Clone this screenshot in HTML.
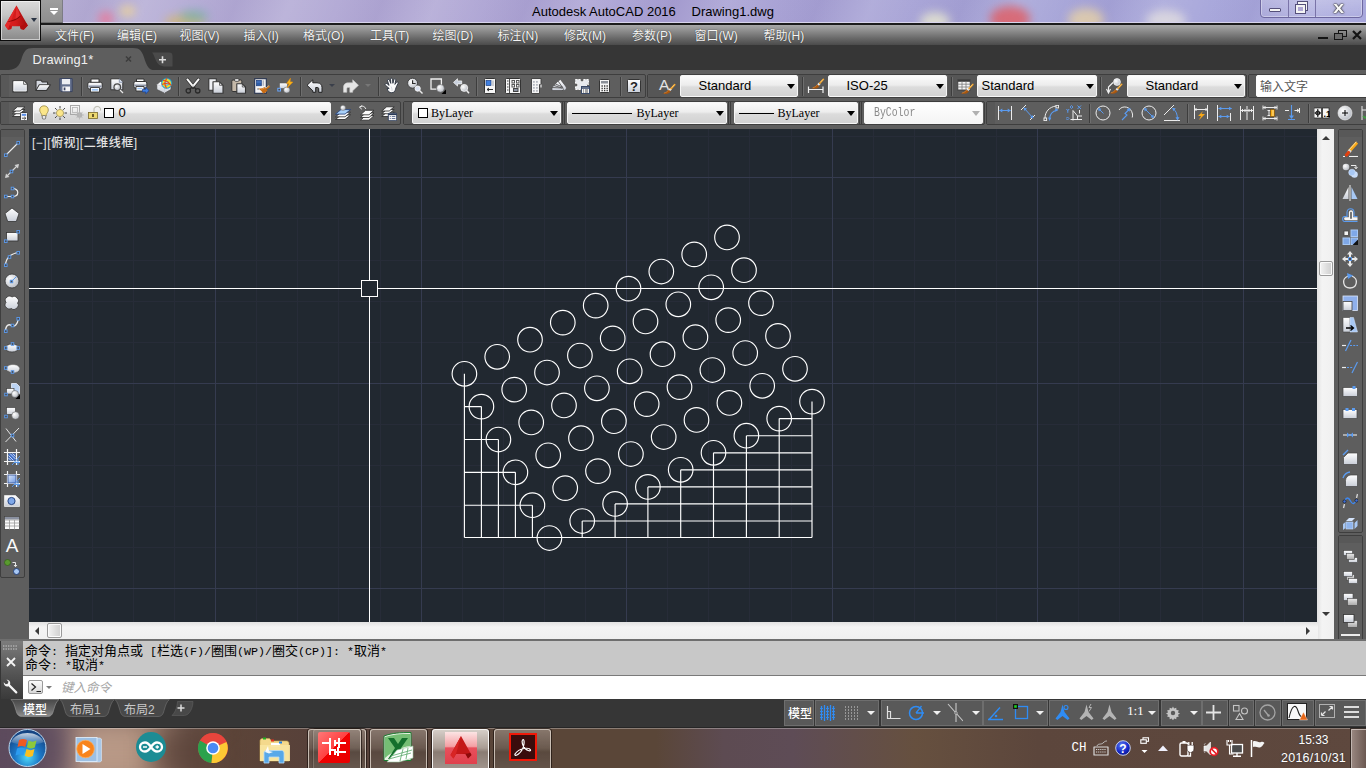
<!DOCTYPE html>
<html lang="zh-CN">
<head>
<meta charset="utf-8">
<title>Autodesk AutoCAD 2016 Drawing1.dwg</title>
<style>
html,body{margin:0;padding:0;}
body{width:1366px;height:768px;overflow:hidden;position:relative;background:#363636;font-family:"Liberation Sans","Noto Sans CJK SC",sans-serif;font-size:12px;color:#000;}
.abs,.abs *{position:absolute;}
div,svg,span{position:absolute;box-sizing:border-box;}
span{white-space:nowrap;}
/* ---- title bar ---- */
#title{left:0;top:0;width:1366px;height:23px;background:linear-gradient(90deg,#b9b1d6 0%,#b3aad6 30%,#aaa2d4 50%,#a8a6d8 75%,#aaaade 100%);overflow:hidden;}
#title .blob{border-radius:50%;filter:blur(5px);}
#titleline{left:0;top:22px;width:1366px;height:1px;background:#d8d4ec;}
#titleline2{left:0;top:23px;width:1366px;height:2px;background:#1c1c1c;}
.tt{top:4px;font-size:13px;color:#000;}
/* ---- menu bar ---- */
#menu{left:0;top:25px;width:1366px;height:20px;background:linear-gradient(180deg,#a9a9a9 0%,#8c8c8c 30%,#6a6a6a 65%,#4b4b4b 100%);}
#menu span{top:1px;font-size:12px;color:#f4f4f4;text-shadow:0 0 1px #222;}
/* ---- file tab bar ---- */
#tabbar{left:0;top:45px;width:1366px;height:25px;background:#363636;}
#tb1bg{left:0;top:70px;width:1366px;height:59px;background:#5e5e5e;}
/* ---- toolbars ---- */
.tbar{background:#5e5e5e;border:1px solid #3e3e3e;border-radius:2px;}
.grip{width:8px;background:#585858;}
.sep{width:1px;background:#3d3d3d;border-right:1px solid #6e6e6e;box-sizing:content-box;}
.combo{background:linear-gradient(180deg,#fafafa 0%,#ededed 45%,#dcdcdc 55%,#d2d2d2 100%);border:1px solid #f6f6f6;border-radius:2px;height:21px;}
.combo span{color:#000;}
.combo.dis{background:linear-gradient(180deg,#fff,#f4f4f4);}
.combo.dis span{color:#8a8a8a;}
.sep2{width:3px;height:22px;border-left:1px solid #3c3c3c;border-right:1px solid #3c3c3c;}
.thumb{background:linear-gradient(90deg,#f4f4f4,#dcdcdc 60%,#cfcfcf);border:1px solid #9a9a9a;border-radius:2px;box-shadow:inset 0 0 0 1px #fafafa;}
.sgrp{background:#595959;border:1px solid #6e6e6e;}
.arrow{width:0;height:0;border-left:4px solid transparent;border-right:4px solid transparent;border-top:5px solid #000;}
/* ---- drawing ---- */
#draw{left:29px;top:129px;width:1288px;height:493px;background:#212830;overflow:hidden;}
#leftbar{left:0;top:129px;width:29px;height:511px;background:#5e5e5e;}
#rightbar{left:1334px;top:127px;width:32px;height:513px;background:#5e5e5e;}
#vscroll{left:1317px;top:129px;width:17px;height:510px;background:linear-gradient(90deg,#e2e2e2,#f4f4f4 30%,#f0f0f0);}
#hscroll{left:29px;top:622px;width:1289px;height:17px;background:linear-gradient(180deg,#e2e2e2,#f4f4f4 30%,#f0f0f0);}
/* ---- command line ---- */
#cmd{left:22px;top:641px;width:1344px;height:58px;background:#c8c8c8;}
#cmdin{left:22px;top:675px;width:1344px;height:23.500px;background:#fff;border-top:1px solid #7a7a7a;}
#cmdleft{left:1px;top:641px;width:21.500px;height:57.500px;background:linear-gradient(180deg,#7c7c7c 0%,#666 30%,#525252 60%,#3a3a3a 100%);}
.mono i{font-style:normal;font-size:13px;}
.mono{font-family:"Liberation Mono","Noto Sans Mono CJK SC","Noto Sans CJK SC",monospace;}
/* ---- status ---- */
#status{left:0;top:699px;width:1366px;height:29px;background:#363636;}
/* ---- taskbar ---- */
#task{left:0;top:728px;width:1366px;height:40px;background:linear-gradient(90deg,#5e4c5a 0%,#6a5860 4%,#7a6460 8%,#5c4438 17%,#56403a 24%,#5a4638 40%,#5a4638 48%,#5d4b52 53%,#5e4c56 58%,#66503f 67%,#5c463c 76%,#5e483e 100%);overflow:hidden;}
</style>
</head>
<body>
<!-- TITLE BAR -->
<div id="title">
  <div style="left:0;top:0;width:1366px;height:23px;background:repeating-linear-gradient(112deg,rgba(255,255,255,.10) 0px,rgba(255,255,255,0) 45px,rgba(70,50,130,.07) 85px,rgba(255,255,255,.10) 135px)"></div>
  <div class="blob" style="left:98px;top:11px;width:16px;height:16px;background:#f07090;opacity:.65;filter:blur(4px)"></div>
  <div class="blob" style="left:119px;top:5px;width:17px;height:12px;background:#f4d890;opacity:.65;filter:blur(4px)"></div>
  <div class="blob" style="left:165px;top:15px;width:40px;height:14px;background:#d8b860;opacity:.7"></div>
  <div class="blob" style="left:180px;top:10px;width:28px;height:12px;background:#60b0a0;opacity:.55"></div>
  <div class="blob" style="left:920px;top:12px;width:30px;height:20px;background:#e8e8d0;opacity:.8"></div>
  <div class="blob" style="left:990px;top:6px;width:40px;height:26px;background:#e85050;opacity:.7"></div>
  <div class="blob" style="left:1068px;top:8px;width:36px;height:24px;background:#f0d8a0;opacity:.7"></div>
  <div class="blob" style="left:1146px;top:10px;width:40px;height:22px;background:#e8e4e0;opacity:.7"></div>
</div>
<div id="titleline"></div><div id="titleline2"></div>
<span class="tt" style="left:532px">Autodesk AutoCAD 2016</span><span class="tt" style="left:691.5px">Drawing1.dwg</span>

<!-- MENU BAR -->
<div id="menu">
  <span style="left:55px">文件(F)</span>
  <span style="left:117px">编辑(E)</span>
  <span style="left:179.5px">视图(V)</span>
  <span style="left:243.5px">插入(I)</span>
  <span style="left:303px">格式(O)</span>
  <span style="left:370px">工具(T)</span>
  <span style="left:432.5px">绘图(D)</span>
  <span style="left:497.5px">标注(N)</span>
  <span style="left:564px">修改(M)</span>
  <span style="left:632px">参数(P)</span>
  <span style="left:694.5px">窗口(W)</span>
  <span style="left:763.5px">帮助(H)</span>
</div>

<div id="tabbar"></div>
<div id="tb1bg"></div>
<div style="left:0;top:0;width:41px;height:41px;background:linear-gradient(180deg,#dadada 0%,#c6c6c6 35%,#a2a2a2 70%,#8a8a8a 100%);border:1px solid #0c0c0c;box-shadow:inset 0 0 0 1px rgba(255,255,255,.55)"></div>
<svg style="left:0;top:0" width="41" height="41" viewBox="0 0 41 41">
<defs><linearGradient id="ga" x1="0" y1="0" x2="1" y2="0"><stop offset="0" stop-color="#e02222"/><stop offset=".45" stop-color="#d41c1c"/><stop offset="1" stop-color="#a00c0c"/></linearGradient></defs>
<path d="M16.500 5.600L5 25.600l3 4.100 3.200-.7.700-2.750h8.100l.8 2.750 2.950.7 4.050-4.100z" fill="url(#ga)"/>
<path d="M16.500 5.600L5 25.600l3 4.100 1.500-4.500z" fill="#e42a2a"/>
<path d="M8.500 21.200c5-1 9-3 11.500-5.800l.6 1.200c-3 3-7 5-12.500 5.500z" fill="#8c0808"/>
<path d="M16.500 5.600l3.500 9.800c-1.500 1.500-3 2.700-4.500 3.500z" fill="#e83434" opacity=".8"/>
<path d="M20 26.250l.8 2.750 2.950.7 4.050-4.100-1.500-2.500c-1.500 1.500-3.500 2.500-6.300 3.150z" fill="#b00e0e"/>
<path d="M8 29.700l3.200-.7.700-2.750-2.400-1z" fill="#c41414"/>
</svg>
<div style="left:31px;top:18px;width:0;height:0;border-left:3.500px solid transparent;border-right:3.500px solid transparent;border-top:4.500px solid #2a3444"></div>
<div style="left:41px;top:0;width:22px;height:23px;background:linear-gradient(180deg,#9e9e9e,#8e8e8e);border-right:1px solid #7c7c84;border-bottom:1px solid #6c6c6c"></div>
<div style="left:50px;top:7.500px;width:8px;height:2px;background:#fff"></div><div style="left:50px;top:11px;width:0;height:0;border-left:4px solid transparent;border-right:4px solid transparent;border-top:4px solid #fff"></div>
<div style="left:1260px;top:-4px;width:103px;height:22px;border:1px solid #6e68a0;border-radius:4px;background:linear-gradient(180deg,rgba(255,255,255,.25),rgba(255,255,255,.05));box-shadow:inset 0 0 0 1px rgba(255,255,255,.35)"></div>
<div style="left:1288px;top:0;width:1px;height:17px;background:#7a74a8"></div><div style="left:1315px;top:0;width:1px;height:17px;background:#7a74a8"></div>
<div style="left:1269px;top:8px;width:12px;height:4px;background:#f4f4f4;border:1px solid #55507a;border-radius:1px"></div>
<div style="left:1298px;top:2px;width:9px;height:8px;border:2px solid #f4f4f4;outline:1px solid #55507a;background:transparent"></div><div style="left:1296px;top:5px;width:9px;height:8px;border:2px solid #f4f4f4;outline:1px solid #55507a;background:#b0a8d4"></div>
<span style="left:1334px;top:-2px;font-size:17px;font-weight:bold;color:#f8f8f8;text-shadow:0 0 1px #333,0 0 1px #333,0 0 2px #333;transform:scaleX(1.15)">x</span>
<div style="left:1318px;top:37px;width:10px;height:2px;background:#141414"></div>
<div style="left:1338px;top:30px;width:9px;height:7px;border:1.500px solid #141414"></div><div style="left:1334px;top:33px;width:9px;height:7px;border:1.500px solid #141414;background:#6a6a6a"></div>
<svg style="left:1352px;top:30px" width="10" height="10" viewBox="0 0 10 10"><path d="M1 1l8 8M9 1l-8 8" stroke="#141414" stroke-width="2.200"/></svg>
<svg style="left:0;top:45px" width="200" height="26" viewBox="0 0 200 26">
<path d="M0 25.500c14 0 18-2 21-10 3-10 5-12.500 12-12.500h100c7 0 9 2.500 12 12.500 3 8 5 10 12 10z" fill="#5e5e5e"/>
<path d="M0 19c8 0 10-1 11-4v11h-11z" fill="#2c2c2c" opacity=".0"/>
<path d="M152 7.500h17c2.500 0 3.500 1 3.500 3.500v10.500h-7c-5 0-8-2-10-7-1.500-3.500-2-5.500-3.500-7z" fill="#4a4a4a"/>
<path d="M126 11.500l5 5M131 11.500l-5 5" stroke="#3c3c3c" stroke-width="1.500"/>
<path d="M159 14.700h7M162.500 11.200v7" stroke="#dcdcdc" stroke-width="1.600"/>
</svg>
<span style="left:32.500px;top:52px;font-size:12.800px;color:#f0f0f0;letter-spacing:.2px">Drawing1*</span>
<svg width="0" height="0" style="left:0;top:0"><defs>
<linearGradient id="gw" x1="0" y1="0" x2="0" y2="1"><stop offset="0" stop-color="#ffffff"/><stop offset="1" stop-color="#c9ced8"/></linearGradient>
<linearGradient id="gg" x1="0" y1="0" x2="0" y2="1"><stop offset="0" stop-color="#e8e8e8"/><stop offset="1" stop-color="#a8a8a8"/></linearGradient>
<radialGradient id="gs" cx=".35" cy=".35" r=".7"><stop offset="0" stop-color="#ffffff"/><stop offset="1" stop-color="#b8bcc4"/></radialGradient>
<linearGradient id="gb" x1="0" y1="0" x2="0" y2="1"><stop offset="0" stop-color="#8fb8f0"/><stop offset="1" stop-color="#3f78d0"/></linearGradient>
<linearGradient id="gbr" x1="0" y1="1" x2="1" y2="0"><stop offset="0" stop-color="#8a4a10"/><stop offset=".6" stop-color="#c87828"/><stop offset="1" stop-color="#f8e8c8"/></linearGradient>
</defs></svg>
<div class="tbar" style="left:0px;top:74px;width:646px;height:24px"></div><div class="grip" style="left:1px;top:75px;height:22px"></div>
<svg style="left:12px;top:78px;overflow:visible" width="16" height="16" viewBox="0 0 16 16"><path d="M.9 2.700h10.900l3.400 3.400v7.800h-14.300z" fill="url(#gw)" stroke="#343434" stroke-width="1.1" stroke-linejoin="round"/><path d="M1.800 3.600h9.600l2.900 2.900v6.500h-12.500z" fill="none" stroke="#fff" stroke-width=".7"/><path d="M11.600 3v3.300h3.300" fill="#f4f4f4" stroke="#343434" stroke-width=".7"/></svg>
<svg style="left:35px;top:78px;overflow:visible" width="16" height="16" viewBox="0 0 16 16"><path d="M1 12.500v-9.500c0-.5.300-.8.800-.8h4l1.500 1.800h4.500c.5 0 .8.300.8.800v2" fill="#d4d8e0" stroke="#343434" stroke-width="1.100" stroke-linejoin="round"/><path d="M1 12.500l3.300-5.700h11.200l-4 5.700z" fill="url(#gw)" stroke="#343434" stroke-width="1.100" stroke-linejoin="round"/><path d="M2.500 11.700l2.300-4.100h9" fill="none" stroke="#fff" stroke-width=".6"/></svg>
<svg style="left:58px;top:78px;overflow:visible" width="16" height="16" viewBox="0 0 16 16"><path d="M1.800 .600h12.400v13h-11l-1.400-1.400z" fill="#66728f" stroke="#3a4460" stroke-width="1"/><rect x="4" y="1" width="8" height="5.300" fill="#eceef2"/><rect x="4.500" y="8.500" width="7.500" height="4.800" fill="#f4f4f6"/><rect x="5.700" y="9.500" width="1.700" height="2.800" fill="#3a4460"/></svg>
<div class="sep" style="left:81px;top:77px;height:19px"></div>
<svg style="left:87px;top:78px;overflow:visible" width="16" height="16" viewBox="0 0 16 16"><path d="M4 4.500v-3.500h8v3.500" fill="#fafafa" stroke="#343434" stroke-width="1"/><rect x=".8" y="4.300" width="14.400" height="6.700" rx="1.600" fill="url(#gw)" stroke="#343434" stroke-width="1"/><path d="M1.500 8.300h13" stroke="#8a92a4" stroke-width="1.600"/><path d="M3.500 9.500h9v4.500h-9z" fill="#fff" stroke="#343434" stroke-width=".9"/><path d="M4.800 11.800h6.400" stroke="#9cc4f4" stroke-width="1.800"/></svg>
<svg style="left:110px;top:78px;overflow:visible" width="16" height="16" viewBox="0 0 16 16"><path d="M.8 .800h8.500l3.500 3.500v7.500h-12z" fill="url(#gw)" stroke="#343434" stroke-width="1" stroke-linejoin="round"/><path d="M9.300 .800v3.500h3.500" fill="#dfe6f4" stroke="#5a6a8a" stroke-width=".6"/><circle cx="7.300" cy="9.200" r="3.900" fill="#4a4a4a"/><circle cx="7.300" cy="9.200" r="2.700" fill="url(#gs)"/><path d="M10 12l3 3" stroke="#e8e8e8" stroke-width="1.300"/></svg>
<svg style="left:133px;top:78px;overflow:visible" width="16" height="16" viewBox="0 0 16 16"><path d="M3.500 4v-3h7.500v3" fill="#fafafa" stroke="#343434" stroke-width="1"/><rect x=".8" y="3.500" width="13" height="6.500" rx="1.600" fill="url(#gw)" stroke="#343434" stroke-width="1"/><path d="M1.500 7.300h11.500" stroke="#8a92a4" stroke-width="1.400"/><path d="M3 8.500h8v4.500h-8z" fill="#fff" stroke="#343434" stroke-width=".9"/><path d="M4.300 10.500h5" stroke="#9cc4f4" stroke-width="1.500"/><path d="M9.500 11.300h3.200v-2l3.300 3.300-3.300 3.300v-2h-3.200z" fill="#3f7fe0" stroke="#1a3f90" stroke-width=".7"/></svg>
<svg style="left:156px;top:78px;overflow:visible" width="16" height="16" viewBox="0 0 16 16"><path d="M.8 6.500l3.500-3h7l3.700 3v5l-6.500 3.700-7.700-3.700z" fill="url(#gw)" stroke="#4a4a4a" stroke-width=".7"/><path d="M.8 6.500l7.700 3v5.700" fill="none" stroke="#c8ccd4" stroke-width=".7"/><circle cx="10.700" cy="5.200" r="5.200" fill="#40bce0" stroke="#2088b0" stroke-width=".6"/><circle cx="10.700" cy="5.200" r="3.400" fill="none" stroke="#f4e020" stroke-width="1.800"/><circle cx="10.700" cy="5.200" r="1.600" fill="#90d8f0"/><path d="M7 2.500c3-.5 6 2 8.500 5M11 .2c-2.500 3-2.500 7-.5 10M6 6.500c3-1.500 6.500-1 9 .5" stroke="#f04818" stroke-width="1.100" fill="none"/></svg>
<div class="sep" style="left:178px;top:77px;height:19px"></div>
<svg style="left:185px;top:78px;overflow:visible" width="16" height="16" viewBox="0 0 16 16"><path d="M1.700 .500l7.600 9.500" stroke="#2a2a2a" stroke-width="3.200"/><path d="M14.300 .500l-7.600 9.500" stroke="#2a2a2a" stroke-width="3.200"/><path d="M2 .800l6.500 8" stroke="#fafafa" stroke-width="2"/><path d="M14 .800l-6.500 8" stroke="#fafafa" stroke-width="2"/><circle cx="3.300" cy="12.800" r="2.200" fill="none" stroke="#2a2a2a" stroke-width="1.300"/><circle cx="12.700" cy="12.800" r="2.200" fill="none" stroke="#2a2a2a" stroke-width="1.300"/><path d="M4.800 11.300l3.200-3 3.200 3" stroke="#2a2a2a" stroke-width="1.300" fill="none"/><circle cx="8" cy="8.300" r=".8" fill="#fff"/></svg>
<svg style="left:208px;top:78px;overflow:visible" width="16" height="16" viewBox="0 0 16 16"><path d="M.800 .800h7.500v11.500h-7.500z" fill="#eef0f4" stroke="#343434" stroke-width="1.1" stroke-linejoin="round"/><path d="M5 3.800h6.500l3.500 3.500v8h-10z" fill="url(#gw)" stroke="#343434" stroke-width="1.1" stroke-linejoin="round"/><path d="M11.500 4.200v3.100h3.100" fill="none" stroke="#343434" stroke-width=".7"/></svg>
<svg style="left:231px;top:78px;overflow:visible" width="16" height="16" viewBox="0 0 16 16"><rect x=".8" y="2" width="10" height="11.500" rx="1.200" fill="#c4b8a8" stroke="#343434" stroke-width="1"/><rect x="3.500" y=".7" width="4.600" height="2.600" rx="1.200" fill="#f4f4f4" stroke="#343434" stroke-width=".8"/><path d="M5.800 5.800h5.500l3.200 3.200v6.300h-8.700z" fill="url(#gw)" stroke="#343434" stroke-width="1.1" stroke-linejoin="round"/><path d="M11.300 6.200v2.800h2.800" fill="none" stroke="#343434" stroke-width=".7"/></svg>
<svg style="left:254px;top:78px;overflow:visible" width="16" height="16" viewBox="0 0 16 16"><rect x=".7" y=".7" width="11.600" height="14.600" fill="#f4f4f6" stroke="#26324e" stroke-width="1.100"/><rect x="2.300" y="2.300" width="5.200" height="5.500" fill="#2c5ca8" stroke="#1c3a78" stroke-width=".6"/><path d="M2.500 4h5" stroke="#5f8ad0" stroke-width=".8"/><path d="M9.300 2.300v5.500" stroke="#b0b4c0" stroke-width="1.600"/><path d="M3 11l1.500-1v2z" fill="#555"/><path d="M15.800 8.200l-4.300 3.300" stroke="#c86c14" stroke-width="1.500"/><path d="M15 7.500l-3.500 2.800" stroke="#f0c890" stroke-width=".8"/><path d="M4.500 10.500c2.500 0 4.500-.3 6-1.500l3 3.500c-1.500 2-3 3-4.500 3-1-2-2.500-3.500-4.500-5z" fill="#c86c14"/><path d="M7 11c1.500 0 2.500-.3 3.500-1" stroke="#e8a050" stroke-width=".8" fill="none"/></svg>
<svg style="left:277px;top:78px;overflow:visible" width="16" height="16" viewBox="0 0 16 16"><rect x="2.500" y="5" width="8" height="5.500" fill="url(#gw)" stroke="#5a5a5a" stroke-width=".6"/><ellipse cx="9.800" cy="12" rx="3.200" ry="3" fill="url(#gs)" stroke="#5a5a5a" stroke-width=".5"/><rect x=".8" y="10.300" width="2.700" height="2.700" fill="#4a4a4a" stroke="#6aa8ff" stroke-width="1"/><path d="M13.500 0l-4 5.500 2.500.3-2 4.200 6-6-2.800-.3z" fill="#f8b418" stroke="#e88808" stroke-width=".4"/></svg>
<div class="sep" style="left:300px;top:77px;height:19px"></div>
<svg style="left:306px;top:78px;overflow:visible" width="16" height="16" viewBox="0 0 16 16"><path d="M1 7.300l5.800-5.500v3h4.200c3.500 0 5 2 5 4.700v4.800h-3.300v-3.300c0-1.200-.5-1.500-1.700-1.500h-1.300v4.800h-2.900v-1.500z" fill="url(#gw)" stroke="#222" stroke-width="1" stroke-linejoin="round"/><path d="M2.500 7.300l3.600-3.400" stroke="#fff" stroke-width=".8"/></svg>
<div style="left:329px;top:84px;width:0;height:0;border-left:3px solid transparent;border-right:3px solid transparent;border-top:3px solid #3a3f4a"></div>
<svg style="left:343px;top:78px;overflow:visible" width="16" height="16" viewBox="0 0 16 16"><path d="M15.500 7.300l-5.800-5.500v3h-4.200c-3.500 0-5 2-5 4.700v4.800h3.300v-3.300c0-1.200.5-1.500 1.700-1.500h1.300v4.800h2.900v-1.500z" fill="#e6e6e6" stroke="#c8c8c8" stroke-width=".6" stroke-linejoin="round"/></svg>
<div style="left:365px;top:84px;width:0;height:0;border-left:3px solid transparent;border-right:3px solid transparent;border-top:3px solid #777"></div>
<div class="sep" style="left:378px;top:77px;height:19px"></div>
<svg style="left:384px;top:78px;overflow:visible" width="16" height="16" viewBox="0 0 16 16"><path d="M5.200 10.500l-3.700-3.200c-1.200-1.200.3-2.600 1.600-1.600l2 1.700-1.600-4.600c-.5-1.400 1.300-2 1.900-.7l1.400 3.300-.3-4.200c0-1.400 1.900-1.400 2 0l.4 4.100 1-3.700c.4-1.300 2.200-.9 1.900.5l-.9 4.300 1.500-2c.9-1.100 2.300-.1 1.600 1.100-1.500 2.700-2 4-2.500 5.800-.6 2.200-1.500 3.400-3.800 3.400s-3.800-1-4.500-4.200z" fill="#fafafa" stroke="#2a3240" stroke-width=".9" stroke-linejoin="round"/><path d="M7 8.500c1 2 1.200 3 1 4.500" fill="none" stroke="#c0c6d0" stroke-width=".7"/></svg>
<svg style="left:407px;top:78px;overflow:visible" width="16" height="16" viewBox="0 0 16 16"><circle cx="5.600" cy="5.200" r="5" fill="url(#gs)" stroke="#3a3a3a" stroke-width=".9"/><path d="M5.600 2.200v3.300h3" stroke="#2a2a2a" stroke-width="1.200" fill="none"/><circle cx="10.700" cy="10.600" r="2.600" fill="#d8e0f0" stroke="#fafafa" stroke-width=".9"/><path d="M12.500 12.500l3 3" stroke="#ececec" stroke-width="1.400"/></svg>
<svg style="left:430px;top:78px;overflow:visible" width="16" height="16" viewBox="0 0 16 16"><path d="M6.500 11.200h-5.500v-10.200h10.400v6" fill="none" stroke="#f0f0f0" stroke-width="1.300"/><circle cx="10.400" cy="10.300" r="3.900" fill="url(#gs)" stroke="#5a5a5a" stroke-width=".5"/><path d="M16 11.500v4.500h-4.500z" fill="#000"/></svg>
<svg style="left:453px;top:78px;overflow:visible" width="16" height="16" viewBox="0 0 16 16"><path d="M.5 4.400l4-3.700v2.200h4.200v3h-4.200v2.200z" fill="#c8d0dc" stroke="#fafafa" stroke-width=".7" stroke-linejoin="round"/><circle cx="11.200" cy="9.900" r="3.500" fill="url(#gs)" stroke="#fafafa" stroke-width=".8"/><path d="M13.700 12.500l2.300 2.800" stroke="#ececec" stroke-width="1.500"/></svg>
<div class="sep" style="left:476px;top:77px;height:19px"></div>
<svg style="left:482px;top:78px;overflow:visible" width="16" height="16" viewBox="0 0 16 16"><rect x="2.500" y=".5" width="11" height="15" rx=".8" fill="#f6f6f6" stroke="#343434"/><rect x="4" y="2.500" width="5" height="5" fill="#3f7fe0" stroke="#1c3f80" stroke-width=".7"/><path d="M11 2.500v5.500" stroke="#b8bcc4" stroke-width="1.400"/><path d="M5 11.500h6M5 11.500l2-1.500M5 11.500l2 1.500" stroke="#2c2c2c" stroke-width="1" fill="none"/></svg>
<svg style="left:505px;top:78px;overflow:visible" width="16" height="16" viewBox="0 0 16 16"><rect x=".5" y=".5" width="15" height="15" rx=".8" fill="#f6f6f6" stroke="#343434"/><path d="M4.500 .5v15" stroke="#3c3c3c" stroke-width=".9"/><path d="M2 3h1.500M2 6h1.500M2 9h1.500M2 12h1.500" stroke="#444" stroke-width="1.200"/><rect x="7" y="2.500" width="2.500" height="2.500" fill="none" stroke="#555"/><rect x="11.500" y="2.500" width="2.500" height="2.500" fill="none" stroke="#555"/><rect x="7" y="6.500" width="2.500" height="2.500" fill="none" stroke="#555"/><rect x="11.500" y="6.500" width="2.500" height="2.500" fill="none" stroke="#555"/><rect x="8.500" y="10.500" width="4.500" height="3" fill="#8890a0" stroke="#444"/></svg>
<svg style="left:528px;top:78px;overflow:visible" width="16" height="16" viewBox="0 0 16 16"><path d="M3.500 .500h9.500v6h-1.500v9h-8z" fill="#f4f4f4" stroke="#3c3c3c" stroke-width=".9"/><path d="M5 3h1.800v1.800h-1.800zM8 3h1.800v1.800h-1.800zM5 6h1.800v1.800h-1.800zM8 6h1.800v1.800h-1.800zM5 9h1.800v1.800h-1.800zM8 9h1.800v1.800h-1.800zM5 12h1.800v1.800h-1.800zM8 12h1.800v1.800h-1.800z" fill="#b4b8c0"/><path d="M13 6.500v3" stroke="#e8e8e8" stroke-width="1.200"/></svg>
<svg style="left:551px;top:78px;overflow:visible" width="16" height="16" viewBox="0 0 16 16"><path d="M1 9.500l6-6.500 2.500-1.500 5 6.500c1.500 1.500 1 4.500-1.500 4.500h-12z" fill="url(#gw)" stroke="#4a4a4a" stroke-width=".7"/><path d="M1 9.500l10 .5c2 0 2 2.500 0 2.500M3 7.500l8 2.500M4.500 6l7 3M7 3l5 7" stroke="#4a4a4a" stroke-width=".8" fill="none"/></svg>
<svg style="left:574px;top:78px;overflow:visible" width="16" height="16" viewBox="0 0 16 16"><path d="M1.500 1.500h5v2h3v-2h5v5h-2v3h2v2h-13v-3h2v-3h-2z" fill="#e8eaee" stroke="#f8f8f8" stroke-dasharray="2 1"/><rect x="7.500" y="8.500" width="8" height="7" fill="#f4f4f4" stroke="#3a4a68"/><path d="M7.500 10h8" stroke="#3a4a68" stroke-width="1.500"/><path d="M9 12h1M11 12h3M9 14h1M11 14h3" stroke="#555"/></svg>
<svg style="left:597px;top:78px;overflow:visible" width="16" height="16" viewBox="0 0 16 16"><rect x="2.500" y="1.500" width="10" height="13" rx=".8" fill="#f6f6f6" stroke="#343434"/><rect x="4" y="3" width="7" height="2.500" fill="#8a8f98"/><path d="M4.500 8h1.300M7 8h1.300M9.500 8h1.300M4.500 10.300h1.300M7 10.300h1.300M9.500 10.300h1.300M4.500 12.500h1.300M7 12.500h1.300M9.500 12.500h1.300" stroke="#333" stroke-width="1.300"/></svg>
<div class="sep" style="left:620px;top:77px;height:19px"></div>
<svg style="left:626px;top:78px;overflow:visible" width="16" height="16" viewBox="0 0 16 16"><rect x="1.500" y="1.500" width="13" height="13" rx=".8" fill="url(#gw)" stroke="#343434"/><text x="8" y="13" font-family="Liberation Sans,sans-serif" font-weight="bold" font-size="13" text-anchor="middle" fill="#222" style="position:static">?</text></svg>
<div class="tbar" style="left:647px;top:74px;width:600px;height:24px"></div><div class="grip" style="left:648px;top:75px;height:22px"></div>
<div style="left:649px;top:75px;width:31px;height:22px;background:#565656"></div>
<div style="left:799px;top:75px;width:29.5px;height:22px;background:#565656"></div>
<div style="left:948px;top:75px;width:29px;height:22px;background:#565656"></div>
<div style="left:1097.5px;top:75px;width:29.5px;height:22px;background:#565656"></div>
<svg style="left:659px;top:78px;overflow:visible" width="16" height="16" viewBox="0 0 16 16"><text x="5.200" y="12.200" font-family="Liberation Sans,sans-serif" font-size="15.500" text-anchor="middle" fill="#e4e4e4">A</text><g transform="translate(3.5 15.3) scale(1)"><path d="M0 0c2.500-.2 4.500-1.500 6-3.800l2.200 2c-1.700 2.300-4.400 3.200-8.200 1.800z" fill="#a8560e"/><path d="M1.500 -.3c2-.4 3.500-1.400 4.800-3" stroke="#d88838" stroke-width=".7" fill="none"/><path d="M6.900 -3l1.700-1.700" stroke="#ececec" stroke-width="2.300"/><path d="M8.600 -4.700l3.600-4" stroke="#f0a028" stroke-width="1.700" stroke-linecap="round"/><path d="M9.300 -5.800l2.500-2.800" stroke="#fce0a0" stroke-width=".6"/></g></svg>
<div class="combo " style="left:680px;top:75px;width:118px;height:22px"><span style="left:17.5px;top:2px;font-size:13px;">Standard</span><div class="arrow" style="left:106px;top:8px;border-top-color:#000"></div></div>
<div class="sep" style="left:802px;top:77px;height:19px"></div>
<svg style="left:807px;top:78px;overflow:visible" width="16" height="16" viewBox="0 0 16 16"><path d="M1.500 8.500v6.500M16 8.500v6.500M1.500 11.500h14.500" stroke="#f0f0f0" stroke-width="1.200" fill="none"/><g transform="translate(4.2 10) scale(1)"><path d="M0 0c2.500-.2 4.500-1.500 6-3.800l2.200 2c-1.700 2.300-4.400 3.200-8.200 1.800z" fill="#a8560e"/><path d="M1.500 -.3c2-.4 3.500-1.400 4.800-3" stroke="#d88838" stroke-width=".7" fill="none"/><path d="M6.900 -3l1.700-1.700" stroke="#ececec" stroke-width="2.300"/><path d="M8.600 -4.700l3.600-4" stroke="#f0a028" stroke-width="1.700" stroke-linecap="round"/><path d="M9.300 -5.800l2.500-2.800" stroke="#fce0a0" stroke-width=".6"/></g></svg>
<div class="combo " style="left:828px;top:75px;width:119px;height:22px"><span style="left:17.5px;top:2px;font-size:13px;">ISO-25</span><div class="arrow" style="left:107px;top:8px;border-top-color:#000"></div></div>
<div class="sep" style="left:951px;top:77px;height:19px"></div>
<svg style="left:957px;top:78px;overflow:visible" width="16" height="16" viewBox="0 0 16 16"><rect x=".8" y="1.600" width="12.400" height="10.400" fill="#f6f6f6" stroke="#3c3c3c" stroke-width=".9"/><path d="M.8 2.800h12.400" stroke="#3c3c3c" stroke-width="2"/><path d="M.8 6.200h12.400M.8 9h12.400M5 3.500v8.500M9 3.500v8.500" stroke="#7a7a7a" stroke-width=".8"/><g transform="translate(3.6 15.2) scale(1)"><path d="M0 0c2.500-.2 4.500-1.500 6-3.800l2.200 2c-1.700 2.300-4.400 3.200-8.200 1.800z" fill="#a8560e"/><path d="M1.500 -.3c2-.4 3.500-1.400 4.800-3" stroke="#d88838" stroke-width=".7" fill="none"/><path d="M6.900 -3l1.700-1.700" stroke="#ececec" stroke-width="2.300"/><path d="M8.600 -4.700l3.600-4" stroke="#f0a028" stroke-width="1.700" stroke-linecap="round"/><path d="M9.300 -5.800l2.500-2.800" stroke="#fce0a0" stroke-width=".6"/></g></svg>
<div class="combo " style="left:977px;top:75px;width:120px;height:22px"><span style="left:3.5px;top:2px;font-size:13px;">Standard</span><div class="arrow" style="left:108px;top:8px;border-top-color:#000"></div></div>
<div class="sep" style="left:1100px;top:77px;height:19px"></div>
<svg style="left:1106px;top:78px;overflow:visible" width="16" height="16" viewBox="0 0 16 16"><path d="M2.500 14.500v-5.500l4.500-4.500" stroke="#f0f0f0" stroke-width="1.200" fill="none"/><path d="M.5 11l2 4 2-4" stroke="#f0f0f0" stroke-width="1.100" fill="none"/><circle cx="11" cy="4" r="3.400" fill="url(#gs)" stroke="#fafafa" stroke-width=".8"/><g transform="translate(3.5 15) scale(1)"><path d="M0 0c2.500-.2 4.500-1.500 6-3.800l2.200 2c-1.700 2.300-4.400 3.200-8.200 1.800z" fill="#a8560e"/><path d="M1.500 -.3c2-.4 3.500-1.400 4.800-3" stroke="#d88838" stroke-width=".7" fill="none"/><path d="M6.900 -3l1.700-1.700" stroke="#ececec" stroke-width="2.300"/><path d="M8.600 -4.700l3.600-4" stroke="#f0a028" stroke-width="1.700" stroke-linecap="round"/><path d="M9.300 -5.800l2.500-2.800" stroke="#fce0a0" stroke-width=".6"/></g></svg>
<div class="combo " style="left:1127px;top:75px;width:118px;height:22px"><span style="left:17.5px;top:2px;font-size:13px;">Standard</span><div class="arrow" style="left:106px;top:8px;border-top-color:#000"></div></div>
<div class="tbar" style="left:1248px;top:74px;width:125px;height:24px"></div><div class="grip" style="left:1249px;top:75px;height:22px"></div>
<div style="left:1256px;top:75px;width:112px;height:22px;background:#fff;border:1px solid #fdfdfd;border-radius:2px"><span style="left:3px;top:1px;font-size:12px;color:#555">输入文字</span></div>
<div class="tbar" style="left:0px;top:101px;width:401px;height:24px"></div><div class="grip" style="left:1px;top:102px;height:22px"></div>
<svg style="left:12px;top:105px" width="16" height="16" viewBox="0 0 16 16"><path d="M0.5 11.5l5 -4.2h7.5l-5 4.2z" fill="#fafafa" stroke="#262626" stroke-width=".8" stroke-linejoin="round"/><path d="M0.5 8.7l5 -4.2h7.5l-5 4.2z" fill="#fafafa" stroke="#262626" stroke-width=".8" stroke-linejoin="round"/><path d="M0.5 6l5 -4.2h7.5l-5 4.2z" fill="#fafafa" stroke="#262626" stroke-width=".8" stroke-linejoin="round"/><rect x="8.500" y="7.500" width="7" height="8.200" rx=".8" fill="#f4f4f6" stroke="#343434" stroke-width=".9"/><rect x="9.800" y="8.800" width="4.400" height="2" fill="#5b8fe8"/><path d="M10 13.200h3.800M12.300 11.900l1.500 1.300-1.500 1.300" stroke="#333" stroke-width=".8" fill="none"/></svg>
<div class="combo " style="left:32.5px;top:102px;width:298.5px;height:22px"><span style="left:85px;top:2px;font-size:13px;">0</span><div class="arrow" style="left:286.5px;top:8px;border-top-color:#000"></div><svg style="left:5px;top:2px" width="10" height="15" viewBox="0 0 10 15"><path d="M5 .8c-2.800 0-4.300 2-4.300 4.200 0 2 1.300 3 2 4.500v1.500h4.600v-1.500c.7-1.500 2-2.500 2-4.500 0-2.200-1.500-4.200-4.300-4.200z" fill="#fbe68a" stroke="#8a7a3a" stroke-width=".7"/><rect x="3.300" y="10.500" width="3.400" height="3.500" rx="1" fill="#e8e8e8" stroke="#555" stroke-width=".7"/></svg><svg style="left:19px;top:3px" width="14" height="14" viewBox="0 0 14 14"><circle cx="7" cy="7" r="3.600" fill="#fbe68a" stroke="#8a7a3a" stroke-width=".6"/><path d="M7 0v2.500M7 11.500v2.500M0 7h2.500M11.500 7h2.500M2 2l1.800 1.800M10.200 10.200l1.800 1.800M12 2l-1.800 1.800M3.800 10.200l-1.800 1.800" stroke="#333" stroke-width=".9"/></svg><svg style="left:36px;top:2px" width="15" height="15" viewBox="0 0 15 15"><rect x=".5" y=".5" width="9" height="9" fill="none" stroke="#a8a8a8" stroke-width="1"/><rect x="2.500" y="2.500" width="5" height="5" fill="none" stroke="#b4b4b4" stroke-width=".8"/><circle cx="9.500" cy="10" r="2.800" fill="#b0b0b0"/><path d="M9.500 5.500v9M5 10h9M6.300 6.800l6.400 6.400M12.700 6.800l-6.400 6.400" stroke="#b8b8b8" stroke-width=".8"/></svg><svg style="left:53px;top:2px" width="15" height="15" viewBox="0 0 15 15"><path d="M7 7v-2.500c0-4 6.500-4 6.500 0v1" fill="none" stroke="#e8e8e8" stroke-width="1.600"/><path d="M7 7v-2.500c0-4 6.500-4 6.500 0v1" fill="none" stroke="#7a7a5a" stroke-width=".4"/><rect x="1.500" y="7.500" width="9" height="6" fill="#ecd870" stroke="#7a6a2a" stroke-width=".8"/><rect x="5" y="9" width="2" height="3" fill="#6a5a2a"/></svg><div style="left:70px;top:5px;width:10px;height:10px;background:#fff;border:1px solid #000"></div></div>
<svg style="left:335px;top:105px" width="16" height="16" viewBox="0 0 16 16"><path d="M0.5 14.5l5.5 -4.5h9.5l-5.5 4.5z" fill="#fafafa" stroke="#262626" stroke-width=".8" stroke-linejoin="round"/><path d="M0.5 11.8l5.5 -4.5h9.5l-5.5 4.5z" fill="#fafafa" stroke="#262626" stroke-width=".8" stroke-linejoin="round"/><path d="M0.5 9.1l5.5 -4.5h9.5l-5.5 4.5z" fill="#a8d0f8" stroke="#1c3a78" stroke-width=".8" stroke-linejoin="round"/><circle cx="8" cy="2.800" r="2.600" fill="url(#gs)" stroke="#5a5a5a" stroke-width=".4"/></svg>
<svg style="left:358.5px;top:105px" width="16" height="16" viewBox="0 0 16 16"><path d="M1.5 15.2l5 -4.5h8.5l-5 4.5z" fill="#fafafa" stroke="#262626" stroke-width=".8" stroke-linejoin="round"/><path d="M1.5 12.5l5 -4.5h8.5l-5 4.5z" fill="#fafafa" stroke="#262626" stroke-width=".8" stroke-linejoin="round"/><path d="M1.5 9.8l5 -4.5h8.5l-5 4.5z" fill="#fafafa" stroke="#262626" stroke-width=".8" stroke-linejoin="round"/><path d="M.8 2c2.500-1.500 5-.8 6 2M.5 2.200l2.700-1.700M.5 2.200l2.300 2" stroke="#f0f0f0" stroke-width="1" fill="none"/></svg>
<svg style="left:381px;top:105px" width="16" height="16" viewBox="0 0 16 16"><path d="M0.7 11.5l5 -4.2h7.5l-5 4.2z" fill="#fafafa" stroke="#262626" stroke-width=".8" stroke-linejoin="round"/><path d="M0.7 8.7l5 -4.2h7.5l-5 4.2z" fill="#fafafa" stroke="#262626" stroke-width=".8" stroke-linejoin="round"/><path d="M0.7 6l5 -4.2h7.5l-5 4.2z" fill="#fafafa" stroke="#262626" stroke-width=".8" stroke-linejoin="round"/><rect x="7.300" y="8.200" width="8.400" height="7.500" rx=".8" fill="#f4f4f6" stroke="#2a3a58" stroke-width=".9"/><path d="M7.300 9.300h8.400" stroke="#2a3a58" stroke-width="1.600"/><path d="M8.800 11.500h1M10.800 11.500h3.500M8.800 13.500h1M10.800 13.500h3.500" stroke="#5a6a90" stroke-width=".9"/></svg>
<div class="tbar" style="left:402.5px;top:101px;width:582px;height:24px"></div><div class="grip" style="left:403.5px;top:102px;height:22px"></div>
<div class="combo " style="left:411.5px;top:102px;width:149px;height:22px"><span style="left:18.5px;top:3px;font-size:12px;font-family:&quot;Liberation Serif&quot;,serif;">ByLayer</span><div class="arrow" style="left:137px;top:8px;border-top-color:#000"></div><div style="left:5px;top:5px;width:10px;height:10px;background:#fff;border:1px solid #000"></div></div>
<div class="sep2" style="left:562px;top:102px"></div>
<div class="combo " style="left:567px;top:102px;width:159.5px;height:22px"><span style="left:68.5px;top:3px;font-size:12px;font-family:&quot;Liberation Serif&quot;,serif;">ByLayer</span><div class="arrow" style="left:147.5px;top:8px;border-top-color:#000"></div><div style="left:4px;top:10px;width:60px;height:1px;background:#000"></div></div>
<div class="sep2" style="left:728px;top:102px"></div>
<div class="combo " style="left:733.5px;top:102px;width:124px;height:22px"><span style="left:43px;top:3px;font-size:12px;font-family:&quot;Liberation Serif&quot;,serif;">ByLayer</span><div class="arrow" style="left:112px;top:8px;border-top-color:#000"></div><div style="left:4px;top:10px;width:35px;height:1px;background:#000"></div></div>
<div class="sep2" style="left:859px;top:102px"></div>
<div class="combo dis" style="left:864px;top:102px;width:119px;height:22px"><span style="left:8.5px;top:3px;font-size:12px;font-family:&quot;Liberation Mono&quot;,monospace;transform:scaleX(.82);transform-origin:0 50%;">ByColor</span><div class="arrow" style="left:107px;top:8px;border-top-color:#b0b0b0"></div></div>
<div class="tbar" style="left:985.5px;top:101px;width:385px;height:24px"></div><div class="grip" style="left:986.5px;top:102px;height:22px"></div>
<svg style="left:997px;top:105px" width="16" height="16" viewBox="0 0 16 16"><path d="M1.500 1v14M14.500 1v14" stroke="#ececec" stroke-width="1"/><path d="M2.500 5.500h11" stroke="#5b9bef" stroke-width="1"/><path d="M2.300 5.500l3-2v4zM13.700 5.500l-3-2v4z" fill="#5b9bef"/></svg>
<svg style="left:1020px;top:105px" width="16" height="16" viewBox="0 0 16 16"><path d="M1 5l5-5M10 15l5-5" stroke="#ececec" stroke-width="1"/><path d="M4 3l9 10" stroke="#5b9bef" stroke-width="1"/><path d="M3.500 2.500l3.500 1-2.500 2.500zM13.500 13.500l-3.500-1 2.500-2.500z" fill="#5b9bef"/></svg>
<svg style="left:1043px;top:105px" width="16" height="16" viewBox="0 0 16 16"><path d="M2 13c0-6 4-11 11-12" stroke="#ececec" stroke-width="1" fill="none"/><rect x="1" y="13" width="2.600" height="2.600" fill="#5a5a5a" stroke="#ececec"/><rect x="13" y=".3" width="2.600" height="2.600" fill="#5a5a5a" stroke="#ececec"/><path d="M6.500 15c0-5 3-9 8-10" stroke="#5b9bef" stroke-width="1.100" fill="none"/><path d="M5 12.500l1.500 3.500 1.800-3.300zM12 3.300l3.500 1.500-3 2z" fill="#5b9bef"/></svg>
<svg style="left:1066px;top:105px" width="16" height="16" viewBox="0 0 16 16"><path d="M4.500 14.500h11.500M7 15.500v-10M7 5.500l4.500 5.500h4.500M11.500 11v4M13.500 5v3.500" stroke="#ececec" stroke-width="1" fill="none"/><path d="M11.500 .5l3.500 3.500M15 .5l-3.500 3.500" stroke="#5b9bef" stroke-width="1"/><path d="M.5 4l1.300 1.800 1.300-1.800M1.800 5.800v2" stroke="#5b9bef" stroke-width="1" fill="none"/><path d="M4 2l1.500-1.500 1.500 1.500-1.500 1.500zM0 13.500l1.500-1.500 1.500 1.500-1.500 1.500z" fill="none" stroke="#5b9bef" stroke-width=".9"/></svg>
<div class="sep" style="left:1089px;top:104px;height:19px"></div>
<svg style="left:1095px;top:105px" width="16" height="16" viewBox="0 0 16 16"><circle cx="8" cy="8" r="7" fill="none" stroke="#ececec" stroke-width="1"/><path d="M8.500 8.500l-4.500-4.500" stroke="#5b9bef" stroke-width="1"/><path d="M3 3l3.500.8-2.700 2.700z" fill="#5b9bef"/></svg>
<svg style="left:1118px;top:105px" width="16" height="16" viewBox="0 0 16 16"><path d="M1 5c3-5 12-4 13.500 4 .2 1.500 0 2.500-.3 3.500" fill="none" stroke="#ececec" stroke-width="1"/><path d="M4 15l5-5-2-1.500 4.500-4.500" stroke="#5b9bef" stroke-width="1.100" fill="none"/><path d="M12.500 3l-1 3.800-2.800-2.800z" fill="#5b9bef"/></svg>
<svg style="left:1141px;top:105px" width="16" height="16" viewBox="0 0 16 16"><circle cx="8" cy="8" r="7" fill="none" stroke="#ececec" stroke-width="1"/><path d="M4 4l8 8" stroke="#5b9bef" stroke-width="1"/><path d="M3 3l3.500.8-2.700 2.700zM13 13l-3.500-.8 2.700-2.700z" fill="#5b9bef"/></svg>
<svg style="left:1164px;top:105px" width="16" height="16" viewBox="0 0 16 16"><path d="M0 15.500h16M0 10l10-10" stroke="#ececec" stroke-width="1"/><path d="M9 3.500c3 2 4.500 6 4.500 11" stroke="#5b9bef" stroke-width="1" fill="none"/><path d="M8 3l3.700.3-2 3zM13.500 15.500l-2-3.300h4z" fill="#5b9bef"/></svg>
<div class="sep" style="left:1187px;top:104px;height:19px"></div>
<svg style="left:1193px;top:105px" width="16" height="16" viewBox="0 0 16 16"><path d="M1.500 0v14M14.500 0v14M1.500 4.500h13M3 3v3M13 3v3" stroke="#ececec" stroke-width="1"/><path d="M10 6l-5 5h3l-2 4 6-6h-3.500z" fill="#f8a818"/></svg>
<svg style="left:1216px;top:105px" width="16" height="16" viewBox="0 0 16 16"><path d="M1.500 0v16M14.500 8v8" stroke="#ececec" stroke-width="1"/><path d="M2.500 3.500h13M2.500 11.500h11" stroke="#5b9bef" stroke-width="1"/><path d="M2.300 3.500l3-1.800v3.600zM16 3.500l-3-1.800v3.600zM2.300 11.500l3-1.800v3.600zM13.700 11.500l-3-1.800v3.600z" fill="#5b9bef"/></svg>
<svg style="left:1239px;top:105px" width="16" height="16" viewBox="0 0 16 16"><path d="M1.500 1v14M8 1v14M14.500 1v14M1.500 5.500h13M3.500 4v3M6 4v3M10 4v3M12.500 4v3" stroke="#ececec" stroke-width="1" fill="none"/></svg>
<svg style="left:1262px;top:105px" width="16" height="16" viewBox="0 0 16 16"><path d="M1 .5v4M15 .5v4M1 2.500h14M3 1v3M13 1v3M1 11.500v4M15 11.500v4M1 13.500h14M3 12v3M13 12v3M5.500 5.500h3M5.500 10.500h3M7 5.500v5" stroke="#ececec" stroke-width="1" fill="none"/><rect x="8.500" y="4.500" width="4" height="7" fill="#f8b018" stroke="#7a4a04" stroke-width=".6"/><path d="M10 6h2M10 8h2M10 10h2" stroke="#fff4d0" stroke-width=".7"/></svg>
<svg style="left:1285px;top:105px" width="16" height="16" viewBox="0 0 16 16"><path d="M0 5.500h4M9.500 5.500h5M14.500 3v5M12 4l2 1.500-2 1.500" stroke="#ececec" stroke-width="1" fill="none"/><path d="M6.500 0v13M3 14.500h7" stroke="#5b9bef" stroke-width="1.100"/><path d="M6.500 14l-2.500-3.500h5z" fill="#5b9bef"/></svg>
<div class="sep" style="left:1308px;top:104px;height:19px"></div>
<svg style="left:1314px;top:105px" width="16" height="16" viewBox="0 0 16 16"><rect x="0" y="3" width="7.500" height="10" fill="#f8f8f8" stroke="#222" stroke-width=".7"/><rect x="8.500" y="3" width="6.500" height="10" fill="#f8f8f8" stroke="#222" stroke-width=".7"/><circle cx="3.800" cy="8" r="2" fill="none" stroke="#000" stroke-width="1"/><path d="M3.800 4v8M.5 8h6.500" stroke="#000" stroke-width="1"/><text x="9.500" y="12" font-size="9" font-family="Liberation Sans,sans-serif" font-weight="bold" fill="#000">.1</text></svg>
<svg style="left:1337px;top:105px" width="16" height="16" viewBox="0 0 16 16"><circle cx="8" cy="8" r="7" fill="url(#gs)" stroke="#fafafa" stroke-width=".6"/><path d="M8 5v6M5 8h6" stroke="#000" stroke-width="1"/></svg>
<svg style="left:1360px;top:105px" width="16" height="16" viewBox="0 0 16 16"><path d="M2 1v14M2 5h6" stroke="#ececec" stroke-width="1"/><path d="M3 11l2 2 3-3" stroke="#40a040" stroke-width="1.500" fill="none"/></svg>

<!-- DRAWING AREA -->
<div id="draw">
<svg id="dsvg" style="left:0;top:0" width="1289" height="493" viewBox="29 129 1289 493">
<path d="M51.5 129V622M92.5 129V622M133.5 129V622M174.5 129V622M256.5 129V622M297.5 129V622M338.5 129V622M380.5 129V622M462.5 129V622M503.5 129V622M544.5 129V622M585.5 129V622M667.5 129V622M708.5 129V622M749.5 129V622M791.5 129V622M873.5 129V622M914.5 129V622M955.5 129V622M996.5 129V622M1078.5 129V622M1119.5 129V622M1160.5 129V622M1202.5 129V622M1284.5 129V622M29 136.5H1318M29 218.5H1318M29 260.5H1318M29 301.5H1318M29 342.5H1318M29 424.5H1318M29 465.5H1318M29 506.5H1318M29 547.5H1318" stroke="#272c38" stroke-width="1" fill="none" shape-rendering="crispEdges"/>
<path d="M215.5 129V622M421.5 129V622M626.5 129V622M832.5 129V622M1037.5 129V622M1243.5 129V622M29 177.5H1318M29 383.5H1318M29 588.5H1318" stroke="#353b4f" stroke-width="1" fill="none" shape-rendering="crispEdges"/>
<path d="M29 288.5H361M377 288.5H1318M369.5 129V280M369.5 297V622" stroke="#fff" stroke-width="1" fill="none" shape-rendering="crispEdges"/>
<rect x="361.5" y="280.5" width="16" height="16" stroke="#fff" stroke-width="1" fill="none" shape-rendering="crispEdges"/>
<g stroke="#fff" stroke-width="1.15" fill="none">
<circle cx="464.4" cy="373.8" r="12.3"/><circle cx="497.2" cy="356.8" r="12.3"/><circle cx="530.0" cy="339.7" r="12.3"/><circle cx="562.8" cy="322.6" r="12.3"/><circle cx="595.7" cy="305.6" r="12.3"/><circle cx="628.5" cy="288.6" r="12.3"/><circle cx="661.3" cy="271.5" r="12.3"/><circle cx="694.2" cy="254.4" r="12.3"/><circle cx="727.0" cy="237.4" r="12.3"/><circle cx="481.4" cy="406.6" r="12.3"/><circle cx="514.2" cy="389.6" r="12.3"/><circle cx="547.0" cy="372.5" r="12.3"/><circle cx="579.9" cy="355.5" r="12.3"/><circle cx="612.7" cy="338.4" r="12.3"/><circle cx="645.5" cy="321.4" r="12.3"/><circle cx="678.3" cy="304.3" r="12.3"/><circle cx="711.2" cy="287.3" r="12.3"/><circle cx="744.0" cy="270.2" r="12.3"/><circle cx="498.4" cy="439.5" r="12.3"/><circle cx="531.2" cy="422.4" r="12.3"/><circle cx="564.0" cy="405.4" r="12.3"/><circle cx="596.9" cy="388.3" r="12.3"/><circle cx="629.7" cy="371.3" r="12.3"/><circle cx="662.5" cy="354.2" r="12.3"/><circle cx="695.4" cy="337.2" r="12.3"/><circle cx="728.2" cy="320.1" r="12.3"/><circle cx="761.0" cy="303.1" r="12.3"/><circle cx="515.4" cy="472.3" r="12.3"/><circle cx="548.2" cy="455.3" r="12.3"/><circle cx="581.0" cy="438.2" r="12.3"/><circle cx="613.9" cy="421.2" r="12.3"/><circle cx="646.7" cy="404.1" r="12.3"/><circle cx="679.5" cy="387.1" r="12.3"/><circle cx="712.4" cy="370.0" r="12.3"/><circle cx="745.2" cy="353.0" r="12.3"/><circle cx="778.0" cy="335.9" r="12.3"/><circle cx="532.4" cy="505.2" r="12.3"/><circle cx="565.2" cy="488.1" r="12.3"/><circle cx="598.0" cy="471.1" r="12.3"/><circle cx="630.9" cy="454.0" r="12.3"/><circle cx="663.7" cy="437.0" r="12.3"/><circle cx="696.5" cy="419.9" r="12.3"/><circle cx="729.4" cy="402.9" r="12.3"/><circle cx="762.2" cy="385.8" r="12.3"/><circle cx="795.0" cy="368.8" r="12.3"/><circle cx="549.4" cy="538.0" r="12.3"/><circle cx="582.2" cy="521.0" r="12.3"/><circle cx="615.1" cy="503.9" r="12.3"/><circle cx="647.9" cy="486.9" r="12.3"/><circle cx="680.7" cy="469.8" r="12.3"/><circle cx="713.5" cy="452.8" r="12.3"/><circle cx="746.4" cy="435.7" r="12.3"/><circle cx="779.2" cy="418.6" r="12.3"/><circle cx="812.0" cy="401.6" r="12.3"/>
<path d="M464.4 373.8V537.5M481.4 406.6V537.5M464.4 406.6H481.4M498.4 439.5V537.5M464.4 439.5H498.4M515.4 472.3V537.5M464.4 472.3H515.4M532.4 505.2V537.5M464.4 505.2H532.4M582.2 521.0V537.5M582.2 521.0H812.0M615.1 503.9V537.5M615.1 503.9H812.0M647.9 486.9V537.5M647.9 486.9H812.0M680.7 469.8V537.5M680.7 469.8H812.0M713.5 452.8V537.5M713.5 452.8H812.0M746.4 435.7V537.5M746.4 435.7H812.0M779.2 418.6V537.5M779.2 418.6H812.0M812.0 401.6V537.5M464.4 537.5H812.0"/>
</g>
</svg>
<span id="vplabel" style="left:3px;top:4px;font-size:12px;color:#e4e4e4;letter-spacing:0.5px;font-weight:500">[−][俯视][二维线框]</span>
</div>
<div id="leftbar"></div>
<div id="rightbar"></div>
<div id="vscroll"></div>
<div id="hscroll"></div>
<div class="tbar" style="left:0px;top:129px;width:25px;height:449px"></div><div style="left:1px;top:130px;width:23px;height:7px;background:#585858"></div>
<svg style="left:4px;top:141px" width="16" height="16" viewBox="0 0 16 16"><path d="M1.500 14.500l13-13" stroke="#ececec" stroke-width="1.100"/><rect x="0.5" y="12.9" width="2.600" height="2.600" fill="#4a4a4a" stroke="#5b9bef" stroke-width=".9"/><rect x="12.9" y="0.5" width="2.600" height="2.600" fill="#4a4a4a" stroke="#5b9bef" stroke-width=".9"/></svg>
<svg style="left:4px;top:163px" width="16" height="16" viewBox="0 0 16 16"><path d="M2 14l12-12" stroke="#d8d8d8" stroke-width="1.100"/><path d="M15 1l-4.500 1 3.500 3.500zM1 15l4.500-1-3.500-3.500z" fill="#d0d0d0"/><rect x="6.2" y="7.2" width="2.600" height="2.600" fill="#4a4a4a" stroke="#5b9bef" stroke-width=".9"/></svg>
<svg style="left:4px;top:185px" width="16" height="16" viewBox="0 0 16 16"><path d="M1.500 11.500h7c7 0 7-8 0-8" stroke="#ececec" stroke-width="1.200" fill="none"/><rect x="0.5" y="10.2" width="2.600" height="2.600" fill="#4a4a4a" stroke="#5b9bef" stroke-width=".9"/><rect x="7.2" y="10.2" width="2.600" height="2.600" fill="#4a4a4a" stroke="#5b9bef" stroke-width=".9"/><rect x="7.2" y="2.2" width="2.600" height="2.600" fill="#4a4a4a" stroke="#5b9bef" stroke-width=".9"/></svg>
<svg style="left:4px;top:207px" width="16" height="16" viewBox="0 0 16 16"><path d="M8 1l7 5.500-2.700 8h-8.600l-2.700-8z" fill="url(#gw)" stroke="#333" stroke-width=".8"/></svg>
<svg style="left:4px;top:229px" width="16" height="16" viewBox="0 0 16 16"><rect x="2.500" y="3.500" width="11.500" height="8.500" fill="url(#gw)" stroke="#333" stroke-width=".8"/><rect x="12.9" y="1.5" width="2.600" height="2.600" fill="#4a4a4a" stroke="#5b9bef" stroke-width=".9"/><rect x="0.5" y="10.9" width="2.600" height="2.600" fill="#4a4a4a" stroke="#5b9bef" stroke-width=".9"/></svg>
<svg style="left:4px;top:251px" width="16" height="16" viewBox="0 0 16 16"><path d="M1.500 14.500c0-7 5-12 13-13" stroke="#ececec" stroke-width="1.200" fill="none"/><rect x="0.5" y="12.9" width="2.600" height="2.600" fill="#4a4a4a" stroke="#5b9bef" stroke-width=".9"/><rect x="12.9" y="0.5" width="2.600" height="2.600" fill="#4a4a4a" stroke="#5b9bef" stroke-width=".9"/><rect x="4.2" y="4.7" width="2.600" height="2.600" fill="#4a4a4a" stroke="#5b9bef" stroke-width=".9"/></svg>
<svg style="left:4px;top:273px" width="16" height="16" viewBox="0 0 16 16"><circle cx="8" cy="8" r="7" fill="url(#gs)" stroke="#333" stroke-width=".8"/><path d="M7.500 8.500l5-5" stroke="#5b9bef" stroke-width="1"/><rect x="6.2" y="7.2" width="2.600" height="2.600" fill="#4a4a4a" stroke="#5b9bef" stroke-width=".9"/></svg>
<svg style="left:4px;top:295px" width="16" height="16" viewBox="0 0 16 16"><path d="M3 2c2-1.500 4-1 5 0 1.500-1 4-1 5 1 2 1.500 2 4 .5 5 1.500 2 1 4-1 5-1 2-4 2-5 .5-2 1-4 .5-5-1-2-1-2-3.500-.5-5-1.500-2-1-4 1-5.500z" fill="url(#gw)" stroke="#333" stroke-width=".8"/></svg>
<svg style="left:4px;top:317px" width="16" height="16" viewBox="0 0 16 16"><path d="M1.500 14.500c0-6 3-8 6-6s6-1 7-7" stroke="#ececec" stroke-width="1.300" fill="none"/><rect x="0.5" y="12.9" width="2.600" height="2.600" fill="#4a4a4a" stroke="#5b9bef" stroke-width=".9"/><rect x="7.2" y="7.2" width="2.600" height="2.600" fill="#4a4a4a" stroke="#5b9bef" stroke-width=".9"/><rect x="12.9" y="0.5" width="2.600" height="2.600" fill="#4a4a4a" stroke="#5b9bef" stroke-width=".9"/></svg>
<svg style="left:4px;top:339px" width="16" height="16" viewBox="0 0 16 16"><ellipse cx="8" cy="9" rx="6.500" ry="4" fill="url(#gw)" stroke="#333" stroke-width=".7"/><rect x="0.5" y="7.7" width="2.600" height="2.600" fill="#4a4a4a" stroke="#5b9bef" stroke-width=".9"/><rect x="12.9" y="7.7" width="2.600" height="2.600" fill="#4a4a4a" stroke="#5b9bef" stroke-width=".9"/><rect x="7.2" y="3.7" width="2.600" height="2.600" fill="#4a4a4a" stroke="#5b9bef" stroke-width=".9"/></svg>
<svg style="left:4px;top:361px" width="16" height="16" viewBox="0 0 16 16"><path d="M3 9c-2-2 1-5 6-5s8 3 5 6c-2 1.500-5 1.500-7 1z" fill="url(#gw)" stroke="#ddd" stroke-width=".6"/><rect x="0.5" y="5.7" width="2.600" height="2.600" fill="#4a4a4a" stroke="#5b9bef" stroke-width=".9"/><rect x="7.2" y="9.7" width="2.600" height="2.600" fill="#4a4a4a" stroke="#5b9bef" stroke-width=".9"/></svg>
<svg style="left:4px;top:383px" width="16" height="16" viewBox="0 0 16 16"><path d="M7.500 .5h5l3 3v7h-8z" fill="#bcd4f4" stroke="#e8f0fc" stroke-width=".8"/><rect x="2.500" y="5.500" width="7.500" height="5.500" fill="url(#gw)" stroke="#444" stroke-width=".7"/><circle cx="11" cy="11" r="3.500" fill="url(#gs)" stroke="#555" stroke-width=".5"/><path d="M16 11.500v4.500h-4.500z" fill="#000"/><rect x="0.7" y="10.2" width="2.600" height="2.600" fill="#4a4a4a" stroke="#5b9bef" stroke-width=".9"/></svg>
<svg style="left:4px;top:405px" width="16" height="16" viewBox="0 0 16 16"><rect x="2.500" y="2.500" width="9" height="7" fill="url(#gw)" stroke="#444" stroke-width=".7"/><circle cx="11.500" cy="10.500" r="3.800" fill="url(#gs)" stroke="#555" stroke-width=".5"/><rect x="0.7" y="10.2" width="2.600" height="2.600" fill="#4a4a4a" stroke="#5b9bef" stroke-width=".9"/></svg>
<svg style="left:4px;top:427px" width="16" height="16" viewBox="0 0 16 16"><path d="M1.500 15l13.500-14M2 1.500l10 13" stroke="#e4e4e4" stroke-width="1"/><rect x="7.2" y="7.2" width="2.600" height="2.600" fill="#4a4a4a" stroke="#5b9bef" stroke-width=".9"/></svg>
<svg style="left:4px;top:449px" width="16" height="16" viewBox="0 0 16 16"><path d="M0 3.500h16M0 12.500h16M3.500 0v16M12.500 0v16" stroke="#f4f4f4" stroke-width="1.200"/><rect x="4.500" y="4.500" width="7" height="7" fill="#3f6fc8"/><path d="M4.500 6.500l5 5M4.500 9l2.500 2.500M6 4.500l5.500 5.500M8.500 4.500l3 3" stroke="#e8eefc" stroke-width=".8"/><path d="M8 16l8-9M10 13.500h6M14 10v6" stroke="#5b9bef" stroke-width="1"/></svg>
<svg style="left:4px;top:471px" width="16" height="16" viewBox="0 0 16 16"><path d="M0 3.500h16M0 12.500h16M3.500 0v16M12.500 0v16" stroke="#f4f4f4" stroke-width="1.200"/><rect x="4" y="4" width="8" height="8" fill="url(#gbl)" stroke="#2c4a90" stroke-width=".8"/><path d="M8 16l8-9M10 13.500h6M14 10v6" stroke="#5b9bef" stroke-width="1"/><defs><linearGradient id="gbl" x1="0" y1="0" x2="1" y2="1"><stop offset="0" stop-color="#dce8fc"/><stop offset="1" stop-color="#6f98e0"/></linearGradient></defs></svg>
<svg style="left:4px;top:493px" width="16" height="16" viewBox="0 0 16 16"><path d="M.5 2.500h11l4 4v7h-15z" fill="url(#gw)" stroke="#e8e8e8" stroke-width=".8"/><circle cx="7.500" cy="8" r="3.600" fill="#7fa8e8" stroke="#1c3a78" stroke-width=".9"/></svg>
<svg style="left:4px;top:515px" width="16" height="16" viewBox="0 0 16 16"><rect x=".5" y="1.500" width="15" height="13" fill="#fafafa" stroke="#444" stroke-width=".8"/><rect x="1" y="2" width="14" height="2.500" fill="#8a90a0"/><path d="M.5 5h15M.5 8h15M.5 11h15M5.500 5v9.500M10.500 5v9.500" stroke="#999" stroke-width=".8"/></svg>
<svg style="left:4px;top:537px" width="16" height="16" viewBox="0 0 16 16"><text x="8" y="15" font-family="Liberation Sans,sans-serif" font-size="19" text-anchor="middle" fill="#fafafa">A</text></svg>
<svg style="left:4px;top:559px" width="16" height="16" viewBox="0 0 16 16"><circle cx="3.500" cy="3.500" r="3" fill="#5a9a30" stroke="#2c5a10" stroke-width=".6"/><circle cx="12.500" cy="12.500" r="3" fill="#a8c8f4" stroke="#1c3a78" stroke-width=".9"/><path d="M8.500 3.500h3v4M10 6l1.500 1.700 1.500-1.700" stroke="#e8e8e8" stroke-width="1" fill="none"/></svg>
<div class="tbar" style="left:1338px;top:129px;width:25px;height:404px"></div><div style="left:1339px;top:130px;width:23px;height:7px;background:#585858"></div>
<svg style="left:1342px;top:141px" width="16" height="16" viewBox="0 0 16 16"><path d="M1 15.500h15" stroke="#f0f0f0" stroke-width="1.100"/><path d="M3 15.500h4" stroke="#5a5a5a" stroke-width="1.300"/><path d="M15 1.500l-8 9" stroke="#f8a818" stroke-width="3.200"/><path d="M14.300 .8l-8 9" stroke="#fce0a0" stroke-width="1"/><path d="M8.500 9l-2 2.500" stroke="#d8d8d8" stroke-width="3.200"/><path d="M6.500 11.500l-2 2.500" stroke="#e04010" stroke-width="3.200" stroke-linecap="round"/></svg>
<svg style="left:1342px;top:163px" width="16" height="16" viewBox="0 0 16 16"><circle cx="4" cy="4" r="3.300" fill="url(#gs)"/><circle cx="12.500" cy="11.500" r="3.300" fill="#c8dcf8"/><circle cx="10" cy="9.500" r="3.300" fill="#a8c8f4" stroke="#dce8fc" stroke-width=".5"/><path d="M9 2.500h5v3M12.500 4l1.500 1.800 1.500-1.800" stroke="#ececec" stroke-width="1" fill="none"/></svg>
<svg style="left:1342px;top:185px" width="16" height="16" viewBox="0 0 16 16"><path d="M8 0v16" stroke="#f0f0f0" stroke-width="1"/><path d="M6.500 2v12h-6z" fill="url(#gw)"/><path d="M9.500 2v12h6z" fill="#a8c8f4"/></svg>
<svg style="left:1342px;top:207px" width="16" height="16" viewBox="0 0 16 16"><path d="M15.500 14.500h-13c-2.500 0-2.500-5 0-5h2.500v-4c0-5 7-5 7 0v4h3.500" stroke="#5b9bef" stroke-width="1.100" fill="none"/><path d="M15.500 12.500h-12c-1 0-1-1.500 0-1.500h4v-5.500c0-2 3-2 3 0v5.500h5" stroke="#f4f4f4" stroke-width="1.300" fill="none"/></svg>
<svg style="left:1342px;top:229px" width="16" height="16" viewBox="0 0 16 16"><rect x="2" y="2" width="4.500" height="4.500" fill="#f4f4f4" stroke="#444" stroke-width=".8"/><rect x="9" y="1" width="6.500" height="6.500" fill="#7fa8e8" stroke="#a8c8f4"/><rect x="1" y="9" width="6.500" height="6.500" fill="#7fa8e8" stroke="#a8c8f4"/><rect x="9" y="9" width="6.500" height="6.500" fill="#7fa8e8" stroke="#a8c8f4"/><path d="M16 10.500v5.500h-5.500z" fill="#111"/></svg>
<svg style="left:1342px;top:251px" width="16" height="16" viewBox="0 0 16 16"><path d="M8 0l3 3.500h-2v3.500h3.500v-2l3.500 3-3.500 3v-2h-3.500v3.500h2l-3 3.500-3-3.500h2v-3.500h-3.500v2l-3.500-3 3.500-3v2h3.500v-3.500h-2z" fill="#e8e8e8"/><rect x="6.500" y="6.500" width="3" height="3" fill="#4a4a4a" stroke="#5b9bef" stroke-width=".9"/></svg>
<svg style="left:1342px;top:273px" width="16" height="16" viewBox="0 0 16 16"><path d="M6 3c-7 3-5 12 2 12s9-9 2-12" fill="none" stroke="#e4e4e4" stroke-width="1.300"/><path d="M5 0l6 2.500-5 3.500z" fill="#5b9bef"/></svg>
<svg style="left:1342px;top:295px" width="16" height="16" viewBox="0 0 16 16"><rect x="1" y="1" width="14.500" height="14.500" fill="#8fb0ec" stroke="#dce8fc" stroke-width=".8"/><rect x="1" y="6.500" width="9" height="9" fill="url(#gw)" stroke="#444" stroke-width=".8"/></svg>
<svg style="left:1342px;top:317px" width="16" height="16" viewBox="0 0 16 16"><path d="M1 .5h7v14.500h-7z" fill="url(#gw)" stroke="#444" stroke-width=".6"/><path d="M8 .5h3.500l4 14.500h-7.500z" fill="#a8c8f4" stroke="#dce8fc" stroke-width=".5"/><path d="M4 11h7M8.500 8.500l3 2.500-3 2.500" stroke="#000" stroke-width="1.300" fill="none"/></svg>
<svg style="left:1342px;top:339px" width="16" height="16" viewBox="0 0 16 16"><path d="M0 6.500h4" stroke="#ececec" stroke-width="1.200"/><path d="M9 1l-5.500 11" stroke="#5b9bef" stroke-width="1.200"/><path d="M8 6.500h8" stroke="#5b9bef" stroke-width="1.100" stroke-dasharray="2 1.200"/></svg>
<svg style="left:1342px;top:361px" width="16" height="16" viewBox="0 0 16 16"><path d="M0 6.500h4" stroke="#ececec" stroke-width="1.200"/><path d="M5 6.500h6" stroke="#5b9bef" stroke-width="1.100" stroke-dasharray="2 1.200"/><path d="M15.500 1l-5.500 11" stroke="#5b9bef" stroke-width="1.200"/></svg>
<svg style="left:1342px;top:383px" width="16" height="16" viewBox="0 0 16 16"><rect x="1" y="4.500" width="14.500" height="9" fill="url(#gw)" stroke="#444" stroke-width=".7"/><rect x="10.500" y="3" width="3" height="3" fill="#5b9bef"/></svg>
<svg style="left:1342px;top:405px" width="16" height="16" viewBox="0 0 16 16"><rect x="1" y="4.500" width="14" height="9" fill="url(#gw)" stroke="#444" stroke-width=".7"/><rect x="3.500" y="3" width="3" height="3" fill="#5b9bef"/><rect x="10" y="3" width="3" height="3" fill="#5b9bef"/></svg>
<svg style="left:1342px;top:427px" width="16" height="16" viewBox="0 0 16 16"><path d="M1 8h14" stroke="#ececec" stroke-width="1.100"/><path d="M5 5.500l3 2.500-3 2.500zM11 5.500l-3 2.500 3 2.500z" fill="#5b9bef"/></svg>
<svg style="left:1342px;top:449px" width="16" height="16" viewBox="0 0 16 16"><path d="M6 4h9.500v11.500h-14v-7z" fill="url(#gw)" stroke="#444" stroke-width=".7"/><path d="M1 6l5-5" stroke="#5b9bef" stroke-width="1.400"/></svg>
<svg style="left:1342px;top:471px" width="16" height="16" viewBox="0 0 16 16"><path d="M9 4h6.500v11.500h-12v-6c0-3 2.500-5.500 5.500-5.500z" fill="url(#gw)" stroke="#444" stroke-width=".7"/><path d="M1 7c1-3 3.500-5.500 7-6" stroke="#5b9bef" stroke-width="1.400" fill="none"/></svg>
<svg style="left:1342px;top:493px" width="16" height="16" viewBox="0 0 16 16"><path d="M1.500 15l1-4M15.500 1l-1 4" stroke="#d8d8d8" stroke-width="1.300"/><path d="M2.500 8c2-4 4-4 6 0s4 3 6-1" stroke="#3f88f0" stroke-width="1.300" fill="none"/><circle cx="2.500" cy="8.500" r="1.600" fill="#3f6fd8" stroke="#111" stroke-width=".6"/><circle cx="14.500" cy="7.500" r="1.600" fill="#3f6fd8" stroke="#111" stroke-width=".6"/></svg>
<svg style="left:1342px;top:515px" width="16" height="16" viewBox="0 0 16 16"><path d="M4 6l3-3h6l-3 3z" fill="#d4e4fc"/><rect x="4" y="7" width="7" height="7" fill="#8fb4ec" stroke="#c8dcf8" stroke-width=".6"/><path d="M1 9l2.500-2v6l-2.500 2zM12.500 8l3-3v6l-3 3z" fill="#a8c8f4"/></svg>
<div class="tbar" style="left:1338px;top:535px;width:25px;height:110px"></div><div style="left:1339px;top:536px;width:23px;height:7px;background:#585858"></div>
<svg style="left:1342px;top:547.5px" width="16" height="16" viewBox="0 0 16 16"><rect x="1.500" y="2.500" width="9" height="5" fill="url(#gw)" stroke="#444" stroke-width=".6"/><rect x="6.500" y="9.500" width="9" height="5" fill="url(#gw)" stroke="#444" stroke-width=".6"/><rect x="4.500" y="5.500" width="8" height="6" fill="url(#gg)" stroke="#444" stroke-width=".6"/></svg>
<svg style="left:1342px;top:569.4px" width="16" height="16" viewBox="0 0 16 16"><rect x="4.500" y="5.500" width="8" height="6" fill="url(#gg)" stroke="#444" stroke-width=".6"/><rect x="1.500" y="2.500" width="9" height="5" fill="url(#gw)" stroke="#444" stroke-width=".6"/><rect x="6.500" y="9.500" width="9" height="5" fill="url(#gw)" stroke="#444" stroke-width=".6"/></svg>
<svg style="left:1342px;top:591.3px" width="16" height="16" viewBox="0 0 16 16"><rect x="1.500" y="2.500" width="9.500" height="7" fill="url(#gw)" stroke="#444" stroke-width=".6"/><rect x="5.500" y="7.500" width="10" height="7" fill="url(#gg)" stroke="#444" stroke-width=".6"/></svg>
<svg style="left:1342px;top:613.2px" width="16" height="16" viewBox="0 0 16 16"><rect x="5.500" y="7.500" width="10" height="7" fill="url(#gg)" stroke="#444" stroke-width=".6"/><rect x="1.500" y="1.500" width="10.500" height="8" fill="url(#gw)" stroke="#333" stroke-width=".8"/></svg>
<div style="left:1341px;top:634px;width:19px;height:2px;background:#ececec"></div>
<div style="left:1322px;top:136px;width:0;height:0;border-left:4px solid transparent;border-right:4px solid transparent;border-bottom:4px solid #3a3a3a"></div>
<div style="left:1322px;top:612px;width:0;height:0;border-left:4px solid transparent;border-right:4px solid transparent;border-top:4px solid #3a3a3a"></div>
<div class="thumb" style="left:1319px;top:261px;width:14px;height:15px"></div>
<div style="left:35px;top:627px;width:0;height:0;border-top:4px solid transparent;border-bottom:4px solid transparent;border-right:4px solid #3a3a3a"></div>
<div style="left:1306px;top:627px;width:0;height:0;border-top:4px solid transparent;border-bottom:4px solid transparent;border-left:4px solid #3a3a3a"></div>
<div class="thumb" style="left:47px;top:623px;width:15px;height:15px"></div>

<!-- COMMAND LINE -->
<div id="cmd"></div>
<div id="cmdin"></div>
<div id="cmdleft"></div>

<!-- STATUS BAR -->
<div id="status"></div>

<!-- TASKBAR -->
<div id="task"><div class="tb" style="left:60px;top:-10px;width:110px;height:70px;background:#c8a690;opacity:.8;filter:blur(14px)"></div><div class="tb" style="left:-20px;top:-10px;width:90px;height:60px;background:#5c4a5e;opacity:.8;filter:blur(12px)"></div><div class="tb" style="left:150px;top:0;width:70px;height:50px;background:#5a4238;opacity:.7;filter:blur(12px)"></div></div>
<div style="left:0;top:639px;width:1366px;height:2px;background:#6e6e6e"></div>
<span class="mono" style="left:25px;top:639.500px;font-size:11.670px;color:#000"><i>命令</i>: <i>指定对角点或</i> [<i>栏选</i>(F)/<i>圈围</i>(WP)/<i>圈交</i>(CP)]: *<i>取消</i>*</span>
<span class="mono" style="left:25px;top:653.500px;font-size:11.670px;color:#000"><i>命令</i>: *<i>取消</i>*</span>
<svg style="left:3px;top:645px" width="14" height="6" viewBox="0 0 14 6"><path d="M0 1h14M0 4h14" stroke="#b0b0b0" stroke-width="1.400" stroke-dasharray="1.400 1.100"/></svg>
<svg style="left:6px;top:657px" width="10" height="10" viewBox="0 0 10 10"><path d="M1 1l8 8M9 1l-8 8" stroke="#f4f4f4" stroke-width="1.800"/></svg>
<svg style="left:3px;top:678px" width="16" height="16" viewBox="0 0 16 16"><path d="M14 13.500l-7-7c.8-2.500-.5-4.500-3.500-5l2 2.200-.8 2-2 .6-2-2c0 3 2 4.800 4.800 4l7 7c1.200 1 2.500-.6 1.500-1.800z" fill="#f4f4f4"/></svg>
<div style="left:28px;top:680px;width:15px;height:14px;background:linear-gradient(180deg,#fafafa,#d8d8d8);border:1px solid #9a9a9a;border-radius:2px"></div>
<svg style="left:30px;top:682px" width="12" height="11" viewBox="0 0 12 11"><path d="M1.500 1.500l4 3.500-4 3.500M6.500 9.500h4.500" stroke="#222" stroke-width="1.200" fill="none"/></svg>
<div style="left:46px;top:686px;width:0;height:0;border-left:3px solid transparent;border-right:3px solid transparent;border-top:3px solid #7a7a7a"></div>
<span style="left:61px;top:676.500px;font-size:12.500px;color:#a4a4a4;font-style:italic">键入命令</span>
<svg style="left:0;top:699px" width="220" height="20" viewBox="0 0 220 20">
<defs><linearGradient id="gt" x1="0" y1="0" x2="0" y2="1"><stop offset="0" stop-color="#484848"/><stop offset=".6" stop-color="#6a6a6a"/><stop offset="1" stop-color="#909090"/></linearGradient></defs>
<path d="M11 .5h48c-3 2-4 6-5.500 11-1 4-2.500 6-6 6h-25c-4 0-5.500-2-6.500-6-1.500-5-2.500-9-5-11z" fill="url(#gt)" stroke="#9a9a9a" stroke-width="0.6"/>
<path d="M60 .5h54.5c-3 2-4 6-5.500 11-1 4-2.500 6-6 6h-31.5c-4 0-5.500-2-6.500-6-1.500-5-2.500-9-5-11z" fill="#484848" stroke="#686868" stroke-width="0.8"/>
<path d="M115 .5h54.5c-3 2-4 6-5.500 11-1 4-2.500 6-6 6h-31.5c-4 0-5.500-2-6.500-6-1.500-5-2.500-9-5-11z" fill="#484848" stroke="#686868" stroke-width="0.8"/>
<path d="M177.500 2.500h15.500c0 5-2 10-5 12.500-1 1-3 1.500-5 1.500h-11c3-3 4-6 5-10 .3-1.500.5-3 .5-4z" fill="#484848" stroke="#606060" stroke-width=".6"/>
<path d="M177.500 9h7M181 5.500v7" stroke="#dcdcdc" stroke-width="1.500"/>
</svg>
<span style="left:23px;top:699.500px;font-size:12px;color:#fff;font-weight:500">模型</span>
<span style="left:70px;top:699.500px;font-size:12px;color:#c8c8c8">布局1</span>
<span style="left:124px;top:699.500px;font-size:12px;color:#c8c8c8">布局2</span>
<div class="sgrp" style="left:784px;top:700px;width:30px;height:26px"></div>
<span style="left:788px;top:704px;font-size:12px;color:#fff;font-weight:500">模型</span>
<div class="sgrp" style="left:815px;top:700px;width:64px;height:26px"></div>
<svg style="left:820px;top:705px" width="15" height="16" viewBox="0 0 15 16"><path d="M1.500 1v14M4.500 0v16M7.500 1v14M10.500 0v16M13.500 1v14" stroke="#2f8cf4" stroke-width="1.300"/><path d="M0 3.500h15M0 6.500h15M0 9.500h15M0 12.500h15" stroke="#2f8cf4" stroke-width=".9" stroke-dasharray="1 1"/></svg>
<svg style="left:844px;top:706px" width="14" height="14" viewBox="0 0 14 14"><path d="M1 1h13M1 4h13M1 7h13M1 10h13M1 13h13" stroke="#d8d8d8" stroke-width="1.100" stroke-dasharray="1 2"/></svg>
<div style="left:866.5px;top:711px;width:0;height:0;border-left:4px solid transparent;border-right:4px solid transparent;border-top:4.500px solid #f0f0f0"></div>
<div class="sgrp" style="left:881px;top:700px;width:102px;height:26px"></div>
<svg style="left:886px;top:705px" width="16" height="15" viewBox="0 0 16 15"><path d="M1.500 1v12.500h13M1.500 6.500h3v7" stroke="#e0e0e0" stroke-width="1.200" fill="none"/></svg>
<svg style="left:908px;top:704px" width="17" height="17" viewBox="0 0 17 17"><circle cx="8" cy="9" r="6.500" fill="none" stroke="#2f8cf4" stroke-width="1.500"/><path d="M8 9h8M8 9l5.500-7" stroke="#2f8cf4" stroke-width="1.300" fill="none"/></svg>
<div style="left:932.5px;top:711px;width:0;height:0;border-left:4px solid transparent;border-right:4px solid transparent;border-top:4.500px solid #f0f0f0"></div>
<svg style="left:947px;top:703px" width="16" height="19" viewBox="0 0 16 19"><path d="M1 1l15 17M9 0v19" stroke="#c8c8c8" stroke-width="1.100" fill="none"/><circle cx="9" cy="10" r="1.300" fill="#595959" stroke="#c8c8c8" stroke-width=".7"/></svg>
<div style="left:971.5px;top:711px;width:0;height:0;border-left:4px solid transparent;border-right:4px solid transparent;border-top:4.500px solid #f0f0f0"></div>
<div class="sgrp" style="left:983px;top:700px;width:65px;height:26px"></div>
<svg style="left:987px;top:705px" width="17" height="16" viewBox="0 0 17 16"><path d="M1 14.500h15M2 14.500l11-12" stroke="#2f8cf4" stroke-width="1.400" fill="none"/><circle cx="9" cy="11" r="1.300" fill="#2f8cf4"/></svg>
<svg style="left:1013px;top:703px" width="16" height="17" viewBox="0 0 16 17"><rect x="2.500" y="3.500" width="12" height="12" fill="none" stroke="#2f8cf4" stroke-width="1.300"/><rect x="0" y="1" width="5" height="5" fill="#111"/><rect x="1.200" y="2.200" width="2.600" height="2.600" fill="#20d020"/></svg>
<div style="left:1036px;top:711px;width:0;height:0;border-left:4px solid transparent;border-right:4px solid transparent;border-top:4.500px solid #f0f0f0"></div>
<div class="sgrp" style="left:1049px;top:700px;width:110px;height:26px"></div>
<svg style="left:1054px;top:704px" width="17" height="17" viewBox="0 0 17 17"><path d="M8.500 .5l2 7.500 5 6.500-1.800 1.500-5.200-4-5.200 4-1.800-1.500 5-6.500z" fill="#2f8cf4"/><circle cx="12" cy="3.500" r="2" fill="none" stroke="#2f8cf4" stroke-width="1.100"/></svg>
<svg style="left:1078px;top:704px" width="17" height="17" viewBox="0 0 17 17"><path d="M8.500 .5l2 7.500 5 6.500-1.800 1.500-5.200-4-5.200 4-1.800-1.500 5-6.500z" fill="#b4b4b4"/><path d="M13 0l-2 3.500h2.500l-2.500 4" stroke="#b4b4b4" stroke-width="1" fill="none"/></svg>
<svg style="left:1101px;top:704px" width="17" height="17" viewBox="0 0 17 17"><path d="M8.500 .5l2 7.500 5 6.500-1.800 1.500-5.200-4-5.200 4-1.800-1.500 5-6.500z" fill="#b4b4b4"/></svg>
<span style="left:1127px;top:703px;font-size:13.500px;color:#f8f8f8;font-family:&quot;Liberation Serif&quot;,serif;letter-spacing:-.3px">1:1</span>
<div style="left:1147.5px;top:711px;width:0;height:0;border-left:4px solid transparent;border-right:4px solid transparent;border-top:4.500px solid #f0f0f0"></div>
<div class="sgrp" style="left:1161px;top:700px;width:41px;height:26px"></div>
<div class="sgrp" style="left:1202px;top:700px;width:25.5px;height:26px"></div>
<div class="sgrp" style="left:1228.5px;top:700px;width:25.5px;height:26px"></div>
<div class="sgrp" style="left:1255px;top:700px;width:25.5px;height:26px"></div>
<div class="sgrp" style="left:1281.5px;top:700px;width:32px;height:26px"></div>
<svg style="left:1166px;top:706px" width="14" height="14" viewBox="0 0 14 14"><path d="M7 0l1.200 2.200 2.300-.8.300 2.400 2.400.3-.8 2.300 2.200 1.200-2.200 1.200.8 2.300-2.400.3-.3 2.400-2.300-.8-1.200 2.200-1.200-2.200-2.300.8-.3-2.400-2.400-.3.800-2.300-2.200-1.200 2.200-1.200-.8-2.300 2.400-.3.300-2.400 2.300.8z" transform="scale(.93) translate(.5 .5)" fill="#c4c4c4"/><circle cx="7" cy="7" r="2.200" fill="#5a5a5a"/></svg>
<div style="left:1189.5px;top:711px;width:0;height:0;border-left:4px solid transparent;border-right:4px solid transparent;border-top:4.500px solid #f0f0f0"></div>
<svg style="left:1206px;top:705px" width="15" height="15" viewBox="0 0 15 15"><path d="M7.500 0v15M0 7.500h15" stroke="#e4e4e4" stroke-width="1.800"/></svg>
<svg style="left:1232px;top:704px" width="17" height="17" viewBox="0 0 17 17"><rect x="1.500" y="1.500" width="5.500" height="5.500" fill="none" stroke="#c4c4c4" stroke-width="1.100"/><circle cx="12.500" cy="7" r="3" fill="none" stroke="#c4c4c4" stroke-width="1.100"/><path d="M7.500 9.500l3.500 6h-7z" fill="none" stroke="#c4c4c4" stroke-width="1.100"/></svg>
<svg style="left:1259px;top:704px" width="17" height="17" viewBox="0 0 17 17"><circle cx="8.500" cy="8.500" r="7.500" fill="none" stroke="#a4a4a4" stroke-width="1.300"/><path d="M5 6l4 5" stroke="#a4a4a4" stroke-width="1.300"/><circle cx="9.500" cy="11.500" r="1.300" fill="#a4a4a4"/></svg>
<svg style="left:1287px;top:703px" width="21" height="18" viewBox="0 0 21 18"><rect x=".5" y=".5" width="19" height="16" fill="#f8f8f8" stroke="#222" stroke-width="1"/><path d="M2 15c3-14 7-14 9-7s4 6 6 7" stroke="#222" stroke-width="1.100" fill="none"/><path d="M16.500 9l4 8h-8z" fill="#e86818" stroke="#fff" stroke-width=".4"/></svg>
<div class="sgrp" style="left:1315px;top:700px;width:51px;height:26px"></div>
<svg style="left:1319px;top:704px" width="16" height="14" viewBox="0 0 16 14"><rect x=".5" y=".5" width="15" height="13" fill="none" stroke="#b0b0b0" stroke-width="1"/><path d="M13.500 2.500l-4 4M13.500 2.500h-3M13.500 2.500v3M2.500 11.500l4-4M2.500 11.500h3M2.500 11.500v-3" stroke="#e4e4e4" stroke-width="1.200" fill="none"/></svg>
<svg style="left:1344px;top:705px" width="15" height="14" viewBox="0 0 15 14"><path d="M0 2h15M0 7h15M0 12h15" stroke="#dcdcdc" stroke-width="1.800"/></svg>
<div style="left:0;top:727px;width:1366px;height:1px;background:#262626"></div><div style="left:0;top:728px;width:1366px;height:1px;background:rgba(255,255,255,.3)"></div>
<svg style="left:8px;top:729px" width="39" height="39" viewBox="0 0 39 39"><defs><radialGradient id="orb" cx=".5" cy=".75" r=".75"><stop offset="0" stop-color="#4fd8f8"/><stop offset=".45" stop-color="#1c78c8"/><stop offset="1" stop-color="#143c78"/></radialGradient>
<linearGradient id="orbh" x1="0" y1="0" x2="0" y2="1"><stop offset="0" stop-color="#fff" stop-opacity=".75"/><stop offset="1" stop-color="#fff" stop-opacity=".05"/></linearGradient></defs>
<circle cx="19.500" cy="19" r="18.500" fill="url(#orb)" stroke="#b8d8f0" stroke-width="1"/>
<path d="M3 13c6-12 27-12 33 0-8 4-25 4-33 0z" fill="url(#orbh)"/>
<path d="M11 11c3-1.500 5-1.500 8 0l-1.700 7c-2.500-1.300-4.800-1.300-7.800 0z" fill="#f05a22"/>
<path d="M20.500 11.500c3 1.500 5 1.500 8 0l-1.700 7c-3 1.300-5.500 1.300-8-.2z" fill="#8cc83c"/>
<path d="M9 19.500c3-1.500 5-1.500 8 0l-1.700 7c-2.500-1.300-4.800-1.300-7.800 0z" fill="#2c9cf0"/>
<path d="M18.500 20c3 1.500 5 1.500 8 0l-1.700 7c-3 1.300-5.500 1.300-8-.2z" fill="#fcc020"/>
</svg>
<svg style="left:75px;top:736px" width="27" height="27" viewBox="0 0 27 27"><path d="M5 2h20l1.500 1v22l-1.500 1h-20z" fill="#a8c8e8" stroke="#dceaf8" stroke-width=".6"/><rect x="1" y="1.500" width="21" height="24" fill="#9cc0e4" stroke="#e4f0fc" stroke-width=".8"/>
<circle cx="10.500" cy="13" r="8.800" fill="#f8841c" stroke="#fcb060" stroke-width=".8"/><path d="M7.500 8l8 5-8 5z" fill="#fff"/></svg>
<svg style="left:136px;top:732px" width="30" height="30" viewBox="0 0 30 30"><circle cx="15" cy="15" r="15" fill="#1c8c94"/><path d="M15 15c-2-3-3.500-4.500-6-4.500-3 0-5 2-5 4.500s2 4.500 5 4.500c2.500 0 4-1.500 6-4.500s3.500-4.500 6-4.500c3 0 5 2 5 4.500s-2 4.500-5 4.500c-2.500 0-4-1.500-6-4.500z" fill="none" stroke="#fff" stroke-width="2.300"/><path d="M7 15h4M19.500 15h3.500M21.200 13.200v3.600" stroke="#fff" stroke-width="1.300"/></svg>
<svg style="left:198px;top:733px" width="30" height="30" viewBox="0 0 30 30"><circle cx="15" cy="15" r="15" fill="#e8453c"/><path d="M15 15L2 7.500A15 15 0 0 0 13.500 30z" fill="#2ba24c"/><path d="M15 15l-1.500 15A15 15 0 0 0 28.500 9z" fill="#fcc934"/><path d="M2 7.500a15 15 0 0 1 26.500 1.500h-13.500z" fill="#e8453c"/><circle cx="15" cy="15" r="6.800" fill="#fff"/><circle cx="15" cy="15" r="5.300" fill="#4a8af4"/></svg>
<svg style="left:259px;top:735px" width="32" height="29" viewBox="0 0 32 29"><path d="M1 6c0-1.500 1-2.500 2.500-2.500h7l2 2.500h15c1.500 0 2.500 1 2.500 2.500v17.500h-29z" fill="#f4d98c" stroke="#c8a850" stroke-width=".6"/>
<path d="M12 8h9v4h-9z" fill="#fff"/><rect x="4" y="2.500" width="3" height="2" fill="#20b020"/><rect x="12" y="4.500" width="3" height="2" fill="#e03020"/><rect x="20" y="6.500" width="3" height="2" fill="#2080e0"/>
<path d="M1 10h30v16h-30z" fill="#f8e4a0" opacity=".9"/>
<path d="M5 28v-10c0-1.500 1-2.500 2.500-2.500h15c1.500 0 2.500 1 2.500 2.500v10h-5v-6h-10v6z" fill="#58a8e8" stroke="#b8dcf8" stroke-width=".8"/><path d="M6 17l3-6 1 5 4 1-4 1.500z" fill="#fff" opacity=".9"/></svg>
<div style="left:313px;top:729px;width:53px;height:42px;background:linear-gradient(180deg,rgba(150,135,125,.75),rgba(115,100,90,.7) 45%,rgba(90,75,66,.7) 55%,rgba(105,90,80,.75));border:1px solid rgba(225,215,205,.8);border-radius:3px;box-shadow:0 0 0 1px rgba(30,20,15,.7)"></div>
<div style="left:308px;top:729px;width:53px;height:42px;background:linear-gradient(180deg,rgba(150,135,125,.75),rgba(115,100,90,.7) 45%,rgba(90,75,66,.7) 55%,rgba(105,90,80,.75));border:1px solid rgba(225,215,205,.8);border-radius:3px;box-shadow:0 0 0 1px rgba(30,20,15,.7)"></div>
<svg style="left:318px;top:732px" width="32" height="31" viewBox="0 0 32 31"><defs><linearGradient id="gr1" x1="0" y1="0" x2="1" y2="1"><stop offset="0" stop-color="#ff7878"/><stop offset=".5" stop-color="#ff4040"/><stop offset=".5" stop-color="#f00000"/><stop offset="1" stop-color="#e80000"/></linearGradient></defs><rect x="0" y="0" width="32" height="31" rx="2" fill="url(#gr1)"/><path d="M4 11h8M12 6v17M12 18h5M17 8v6M17 11h4M21 6v10M21 11h7M17 17v6M20 20h-3M20 15v9M20 20h8" stroke="#fff" stroke-width="2" fill="none"/></svg>
<div style="left:370px;top:729px;width:57px;height:42px;background:linear-gradient(180deg,rgba(150,135,125,.75),rgba(115,100,90,.7) 45%,rgba(90,75,66,.7) 55%,rgba(105,90,80,.75));border:1px solid rgba(225,215,205,.8);border-radius:3px;box-shadow:0 0 0 1px rgba(30,20,15,.7)"></div>
<svg style="left:383px;top:732px" width="31" height="31" viewBox="0 0 31 31"><path d="M1 4c8-3 16-3.500 27-3.500v28h-27z" fill="#e8f4e4" stroke="#1c7c30" stroke-width="1"/><path d="M2 5c8-2.500 15-3 25-3v12c-8 1-17 5-25 12z" fill="#58b058" opacity=".8"/><path d="M5 6h6l4 6 4-6h6l-7 10 7 11h-6l-4-7-4 7h-6l7-11z" fill="#14702c"/><path d="M14 18l16-4v12l-14 4h-12z" fill="#fff" stroke="#9ac8a0" stroke-width=".6"/><path d="M8 24l21-6M6 27l22-6M20 17l-3 12M25 16l-2 11" stroke="#58a868" stroke-width=".8"/></svg>
<div style="left:432px;top:729px;width:57px;height:42px;background:linear-gradient(180deg,rgba(235,230,225,.85),rgba(190,180,172,.8) 45%,rgba(150,138,130,.8) 55%,rgba(175,165,158,.85));border:1px solid rgba(255,255,255,.9);border-radius:3px;box-shadow:0 0 0 1px rgba(30,20,15,.7)"></div>
<svg style="left:445px;top:732px" width="32" height="32" viewBox="0 0 32 32"><defs><linearGradient id="gpk" x1="0" y1="0" x2="0" y2="1"><stop offset="0" stop-color="#fce4e4"/><stop offset=".45" stop-color="#f4a0a4"/><stop offset=".5" stop-color="#e8505c"/><stop offset="1" stop-color="#e0404c"/></linearGradient></defs><rect width="32" height="32" fill="url(#gpk)"/><path d="M16 4L5.500 23l3 3.500 2.500-4.500h9.500l2.500 4.500 3.500-3.500z" fill="#c41818"/><path d="M16 4L11 22l-2.500 4.500-3-3.500z" fill="#d82424"/><path d="M11 22h9.500l2.500 4.500 3.500-3.500-1.200-2.300c-4 1.300-9 1.600-14.300 1.300z" fill="#8c0a0a"/></svg>
<div style="left:494px;top:729px;width:57px;height:42px;background:linear-gradient(180deg,rgba(150,135,125,.75),rgba(115,100,90,.7) 45%,rgba(90,75,66,.7) 55%,rgba(105,90,80,.75));border:1px solid rgba(225,215,205,.8);border-radius:3px;box-shadow:0 0 0 1px rgba(30,20,15,.7)"></div>
<svg style="left:509px;top:733px" width="28" height="28" viewBox="0 0 28 28"><rect x="1" y="1" width="26" height="26" fill="#3a0c0c" stroke="#f01808" stroke-width="2"/><path d="M6 21c2-3 6-5 9-5.500s6 0 6.500 1.500-3 1-5.500-1.500-3.500-7-2.500-8.500 2 .5 1.500 4-3 8-5.500 10-4 1.500-3.500 0z" fill="none" stroke="#fff" stroke-width="1.200"/></svg>
<span class="mono" style="left:1071.500px;top:740.500px;font-size:12.500px;color:#fff;letter-spacing:0">CH</span>
<svg style="left:1093px;top:739.5px" width="16" height="16" viewBox="0 0 16 16"><path d="M1 7h14v8h-14z" fill="none" stroke="#d8d8d8" stroke-width="1.200" stroke-linejoin="round"/><path d="M3 9.500h10M3 12h10" stroke="#d0d0d0" stroke-width="1.200" stroke-dasharray="1.200 .9"/><path d="M4 6c1-3 4-1 6-3s3-2 4-2" stroke="#c0c0c0" stroke-width="1" fill="none"/></svg>
<svg style="left:1115px;top:739.5px" width="16" height="16" viewBox="0 0 16 16"><defs><radialGradient id="ghq" cx=".4" cy=".3" r=".8"><stop offset="0" stop-color="#5a78f0"/><stop offset=".6" stop-color="#1428c8"/><stop offset="1" stop-color="#0a1478"/></radialGradient></defs><circle cx="8" cy="8" r="7.300" fill="url(#ghq)" stroke="#c8d0e8" stroke-width="1"/><text x="8" y="12.500" font-family="Liberation Sans,sans-serif" font-weight="bold" font-size="12" text-anchor="middle" fill="#fff">?</text></svg>
<svg style="left:1140px;top:737px" width="10" height="17" viewBox="0 0 10 17"><rect x="3" y=".8" width="5.500" height="3.500" fill="none" stroke="#fff" stroke-width="1.100"/><rect x=".8" y="2.800" width="5.500" height="3.500" fill="#5a4a44" stroke="#fff" stroke-width="1.100"/><path d="M1.500 13h6l-3 3z" fill="#fff"/></svg>
<svg style="left:1158px;top:745px" width="10" height="7" viewBox="0 0 10 7"><path d="M0 6l5-5.500 5 5.500z" fill="#f0f0fc"/></svg>
<svg style="left:1179px;top:739.5px" width="16" height="17" viewBox="0 0 16 17"><rect x="1" y="3" width="8" height="13" rx="1.500" fill="none" stroke="#fff" stroke-width="1.400"/><rect x="3.500" y="1" width="3" height="2" fill="#fff"/><path d="M8 5h7v4c0 2-1.500 3.500-3.500 3.500s-3.500-1.500-3.500-3.500z" fill="#fff" stroke="#3a2a24" stroke-width=".8"/><path d="M9.800 2v3M13.200 2v3M11.500 12.500v3.500h-3" stroke="#fff" stroke-width="1.300" fill="none"/></svg>
<svg style="left:1203px;top:739.5px" width="16" height="17" viewBox="0 0 16 17"><path d="M1 6h2.500l4-4v13l-4-4h-2.500z" fill="#e4e4e4" stroke="#fff" stroke-width=".6"/><path d="M2.500 3l-1.500 2M2 13l-1-1.500" stroke="#c8c8c8" stroke-width=".7"/><circle cx="11" cy="11.500" r="3.800" fill="#fff" stroke="#e81c24" stroke-width="1.700"/><path d="M8.500 9l5 5" stroke="#e81c24" stroke-width="1.700"/></svg>
<svg style="left:1226px;top:738.5px" width="18" height="19" viewBox="0 0 18 19"><rect x="5.500" y="5.500" width="11" height="8.500" fill="#4a4a4a" stroke="#fff" stroke-width="1.300"/><path d="M11 14v2.500M7 17.300h8" stroke="#fff" stroke-width="1.400"/><path d="M1 1v5h5v-5M2.500 1v2M4.500 1v2M3.500 6v9h4" stroke="#fff" stroke-width="1.100" fill="none"/></svg>
<svg style="left:1250px;top:739.5px" width="16" height="17" viewBox="0 0 16 17"><path d="M1.500 0v17" stroke="#fff" stroke-width="1.500"/><path d="M3 1.500c3-1.500 5 1.500 8 .5 1.500-.5 2.500 0 3.500 1-1 1-1.500 2.500-3.500 4-3 1.500-5-1-8 0z" fill="#f4f4f4"/></svg>
<span style="left:1298.500px;top:732.500px;font-size:12px;color:#fff;text-shadow:0 0 2px #333">15:33</span>
<span style="left:1281px;top:750.500px;font-size:12.500px;letter-spacing:.25px;color:#fff;text-shadow:0 0 2px #333">2016/10/31</span>
<div style="left:1351px;top:729px;width:16px;height:40px;background:linear-gradient(90deg,rgba(190,175,170,.6),rgba(120,105,100,.5));border:1px solid rgba(230,220,215,.7);box-shadow:0 0 0 1px rgba(40,30,25,.8)"></div>
</body>
</html>
